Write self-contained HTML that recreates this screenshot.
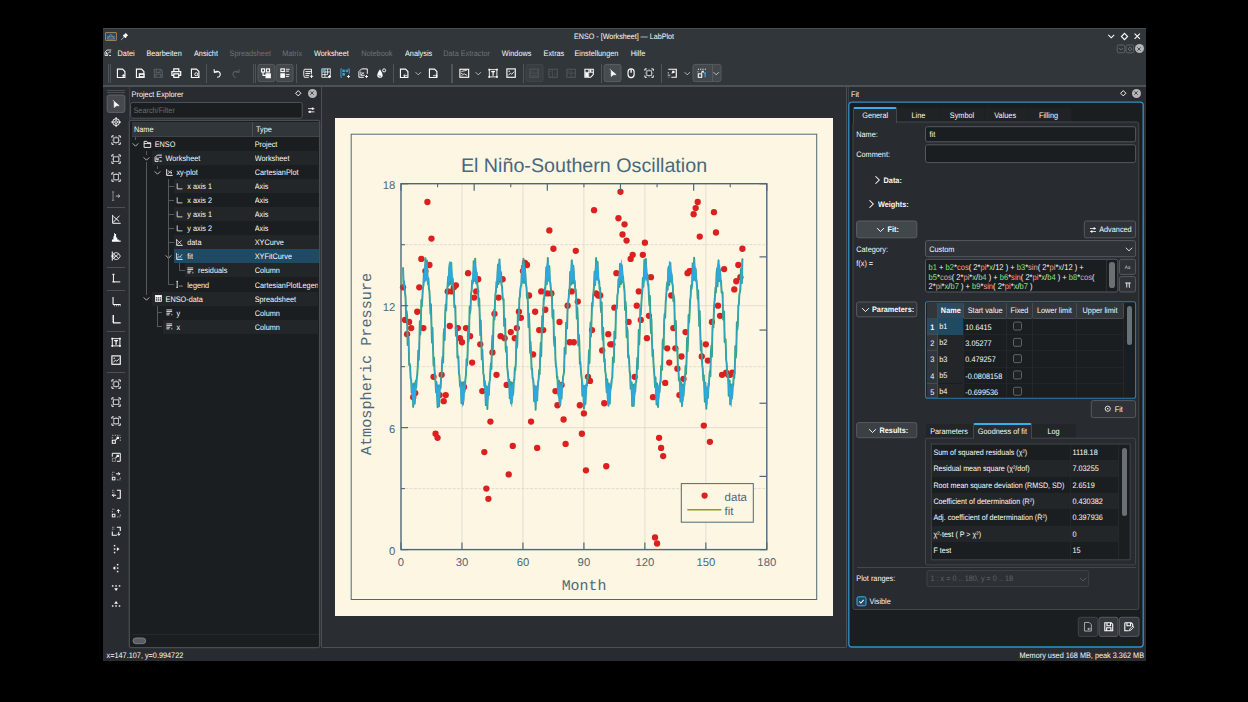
<!DOCTYPE html>
<html><head><meta charset="utf-8"><title>ENSO - [Worksheet] — LabPlot</title>
<style>
*{box-sizing:border-box;margin:0;padding:0}
html,body{width:1248px;height:702px;background:#000;overflow:hidden}
body{position:relative;font-family:"Liberation Sans",sans-serif;font-size:7.3px;color:#fcfcfc;line-height:1;text-rendering:geometricPrecision}
.a{position:absolute}
.t{position:absolute;white-space:nowrap;line-height:10px;height:10px;transform:scaleY(1.1);transform-origin:50% 55%}
.dis{color:#6f7377}
.b{font-weight:bold}
#win{left:103px;top:28px;width:1043px;height:633px;background:#31363b}
.ico{position:absolute;width:12px;height:12px;fill:none;stroke:#fcfcfc;stroke-width:1}
.sep{position:absolute;width:1px;background:#4b5055}
.btn{position:absolute;background:#31363b;border:1px solid #5b6065;border-radius:2px}
.inp{position:absolute;background:#1b1e20;border:1px solid #54595e;border-radius:2px}
.row{position:absolute;left:131px;width:188px;height:14px}
</style></head><body>
<div class="a" id="win"></div>

<div class="a" style="left:103px;top:28px;width:1043.00px;height:1.00px;background:#474c52"></div>
<div class="a" style="left:103px;top:86.6px;width:1043.00px;height:574.40px;background:#282b2f"></div>
<div class="a" style="left:105px;top:31.6px;width:11.8px;height:9.7px;background:#2d4a63;border:1px solid #9c7f55;border-radius:1px"></div>
<svg class="a" style="left:106px;top:32.6px" width="9.8" height="7.7" viewBox="0 0 10 8" fill="none" stroke="#8fa6b8" stroke-width="0.7"><path d="M1 4 H9 M1 6 L5 1.5 L9 6 M1 6.3 H9"/></svg>
<svg class="a" style="left:119.5px;top:31.5px" width="9" height="9" viewBox="0 0 16 16" fill="#fcfcfc" stroke="none"><path d="M10 1.5 L14.5 6 L12.5 7 L10.5 10.5 L9 10.5 L7.5 9 L2 14.5 L1.5 14 L7 8.5 L5.5 7 L5.5 5.5 L9 3.5 Z"/></svg>
<div class="t " style="left:624px;top:32px;transform:translateX(-50%) scaleY(1.1);font-size:7.15px">ENSO - [Worksheet] — LabPlot</div>
<svg class="a" style="left:1106.75px;top:32.35px" width="8.5" height="8.5" viewBox="0 0 16 16" fill="none" stroke="#fcfcfc" stroke-width="1.5" ><path d="M2.5 5.5 L8 11 L13.5 5.5" stroke-width="2"/></svg>
<svg class="a" style="left:1119.50px;top:31.80px" width="9" height="9" viewBox="0 0 16 16" fill="none" stroke="#fcfcfc" stroke-width="1.5" ><path d="M8 2.5 L13.5 8 L8 13.5 L2.5 8 Z" stroke-width="2"/></svg>
<svg class="a" style="left:1132.95px;top:32.05px" width="8.5" height="8.5" viewBox="0 0 16 16" fill="none" stroke="#fcfcfc" stroke-width="1.5" ><path d="M3 3 L13 13 M13 3 L3 13" stroke-width="2"/></svg>
<svg class="a" style="left:1115px;top:43px" width="13" height="13"><rect x="2.20" y="2.00" width="7.60" height="7.80" rx="1.5" fill="none" stroke="#5d6267" stroke-width="1.0"/></svg>
<svg class="a" style="left:1118.00px;top:46.30px" width="6" height="6" viewBox="0 0 16 16" fill="none" stroke="#7c8186" stroke-width="1.5" ><path d="M3 5.5 L8 10.5 L13 5.5" stroke-width="2"/></svg>
<svg class="a" style="left:1124px;top:43px" width="13" height="13"><rect x="2.00" y="2.00" width="7.60" height="7.80" rx="1.5" fill="none" stroke="#5d6267" stroke-width="1.0"/></svg>
<svg class="a" style="left:1126.80px;top:45.90px" width="6" height="6" viewBox="0 0 16 16" fill="none" stroke="#7c8186" stroke-width="1.5" ><path d="M8 3 L13 8 L8 13 L3 8 Z" stroke-width="2"/></svg>
<div class="a" style="left:1134.9px;top:44.3px;width:9.00px;height:9.00px;background:#b4b6b8;border-radius:50%"></div>
<svg class="a" style="left:1136.40px;top:45.80px" width="6" height="6" viewBox="0 0 16 16" fill="none" stroke="#31363b" stroke-width="1.5" ><path d="M3.5 3.5 L12.5 12.5 M12.5 3.5 L3.5 12.5" stroke-width="2.2"/></svg>
<svg class="a" style="left:103.70px;top:49.20px" width="8" height="7" viewBox="0 0 16 14" fill="none" stroke="#fcfcfc" stroke-width="1.5" ><path d="M2 13 V6 L6 2 H14.5 M2 13 H8 M5 6 V10.5 H9 M6 9.5 L9 6.5 M10 6 H14 M10 13 H14" stroke-width="1.6"/></svg>
<div class="t " style="left:117.6px;top:49px;">Datei</div>
<div class="t " style="left:146.4px;top:49px;">Bearbeiten</div>
<div class="t " style="left:194px;top:49px;">Ansicht</div>
<div class="t dis" style="left:229.6px;top:49px;">Spreadsheet</div>
<div class="t dis" style="left:282.2px;top:49px;">Matrix</div>
<div class="t " style="left:314px;top:49px;">Worksheet</div>
<div class="t dis" style="left:361.2px;top:49px;">Notebook</div>
<div class="t " style="left:405px;top:49px;">Analysis</div>
<div class="t dis" style="left:443.3px;top:49px;">Data Extractor</div>
<div class="t " style="left:501.8px;top:49px;">Windows</div>
<div class="t " style="left:543.6px;top:49px;">Extras</div>
<div class="t " style="left:574.5px;top:49px;">Einstellungen</div>
<div class="t " style="left:630.7px;top:49px;">Hilfe</div>
<div class="a" style="left:108px;top:64px;width:1.00px;height:18.50px;background:#50555a"></div><div class="a" style="left:110px;top:64px;width:1.00px;height:18.50px;background:#50555a"></div>
<svg class="a" style="left:114.90px;top:67.40px" width="12.2" height="12.2" viewBox="0 0 16 16" fill="none" stroke="#fcfcfc" stroke-width="1.5" ><path d="M3.2 2.8 H9.8 L13 6 V13.8 H3.2 Z"/><path d="M11 9.5 V13.5 M9 11.5 H13" stroke-width="1.2"/></svg>
<svg class="a" style="left:133.60px;top:67.40px" width="12.2" height="12.2" viewBox="0 0 16 16" fill="none" stroke="#fcfcfc" stroke-width="1.5" ><path d="M3.2 2.8 H9.8 L13 6 V13.8 H3.2 Z"/><rect x="7" y="9" width="6" height="4.5" fill="#31363b"/><path d="M7 9.5 H13 M7.5 13 H12.5"/></svg>
<svg class="a" style="left:151.90px;top:67.40px" width="12.2" height="12.2" viewBox="0 0 16 16" fill="none" stroke="#585c61" stroke-width="1.5" ><path d="M3 3 H11.5 L13.5 5 V13.5 H3 Z M5.5 3 V7 H10.5 V3 M5 13 V9.5 H11.5 V13"/></svg>
<svg class="a" style="left:170.30px;top:67.40px" width="12.2" height="12.2" viewBox="0 0 16 16" fill="none" stroke="#fcfcfc" stroke-width="1.5" ><path d="M5 6 V2.5 H11.5 V6 M5 11 H2.5 V6 H14 V11 H11.5 M5 9 H11.5 V13.5 H5 Z" stroke-width="1.6"/></svg>
<svg class="a" style="left:188.90px;top:67.40px" width="12.2" height="12.2" viewBox="0 0 16 16" fill="none" stroke="#fcfcfc" stroke-width="1.5" ><path d="M3.2 2.8 H9.8 L13 6 V13.8 H3.2 Z"/><circle cx="9.5" cy="9.5" r="2" stroke-width="1.2"/><path d="M11 11 L13.5 13.5" stroke-width="1.2"/></svg>
<div class="a" style="left:206px;top:64px;width:1.00px;height:18.50px;background:#50555a"></div>
<svg class="a" style="left:210.90px;top:67.40px" width="12.2" height="12.2" viewBox="0 0 16 16" fill="none" stroke="#fcfcfc" stroke-width="1.5" ><path d="M4 3 L4.5 7 L8.5 6.5 M4.8 6.8 C9 4 13 7 12 11 C11.5 12.5 10 13.5 8 13.5"/></svg>
<svg class="a" style="left:229.90px;top:67.40px" width="12.2" height="12.2" viewBox="0 0 16 16" fill="none" stroke="#585c61" stroke-width="1.5" ><path d="M12 3 L11.5 7 L7.5 6.5 M11.2 6.8 C7 4 3 7 4 11 C4.5 12.5 6 13.5 8 13.5"/></svg>
<div class="a" style="left:253.3px;top:64px;width:1.00px;height:18.50px;background:#50555a"></div><div class="a" style="left:255.3px;top:64px;width:1.00px;height:18.50px;background:#50555a"></div>
<svg class="a" style="left:256px;top:62px" width="22" height="23"><rect x="2.00" y="2.40" width="16.80" height="17.20" rx="2.0" fill="#43484d" stroke="#565b60" stroke-width="1.0"/></svg>
<svg class="a" style="left:274px;top:62px" width="23" height="23"><rect x="2.20" y="2.40" width="16.80" height="17.20" rx="2.0" fill="#43484d" stroke="#565b60" stroke-width="1.0"/></svg>
<svg class="a" style="left:260.40px;top:67.40px" width="12.2" height="12.2" viewBox="0 0 16 16" fill="none" stroke="#fcfcfc" stroke-width="1.5" ><rect x="2" y="2.5" width="4" height="4"/><rect x="8.5" y="2.5" width="4" height="4"/><rect x="8" y="9" width="5.5" height="5" fill="#fcfcfc"/><path d="M4 6.5 V11 H8"/></svg>
<svg class="a" style="left:278.60px;top:67.40px" width="12.2" height="12.2" viewBox="0 0 16 16" fill="none" stroke="#fcfcfc" stroke-width="1.5" ><rect x="2.5" y="2.5" width="4.5" height="3.5"/><rect x="2.5" y="9" width="4.5" height="4.5" fill="#fcfcfc"/><path d="M9 3 H14 M9 5.5 H13 M9 10 H14 M9 12.5 H13" stroke-width="1.1"/></svg>
<div class="a" style="left:296.1px;top:64px;width:1.00px;height:18.50px;background:#50555a"></div>
<svg class="a" style="left:301.60px;top:67.40px" width="12.2" height="12.2" viewBox="0 0 16 16" fill="none" stroke="#fcfcfc" stroke-width="1.5" ><path d="M3 3 H13 M3 3 C2 5 2 11 3 13.5 H9 M4.5 6 H12 M4.5 8.5 H11 M4.5 11 H9.5 M12.5 3 V9" stroke-width="1.2"/><path d="M12.5 10 V14.5 M10.3 12.2 H14.7" stroke-width="1.2"/></svg>
<svg class="a" style="left:319.90px;top:67.40px" width="12.2" height="12.2" viewBox="0 0 16 16" fill="none" stroke="#fcfcfc" stroke-width="1.5" ><rect x="2.5" y="2.5" width="11" height="11" stroke-width="1"/><path d="M2.5 6.5 H13.5 M2.5 10 H10 M6.5 2.5 V13.5 M10 2.5 V10" stroke-width="1"/><rect x="3" y="3" width="3.5" height="3.5" fill="#3daee9" stroke="none"/><path d="M12.5 10.5 V14.5 M10.5 12.5 H14.5" stroke-width="1.2"/></svg>
<svg class="a" style="left:338.60px;top:67.40px" width="12.2" height="12.2" viewBox="0 0 16 16" fill="none" stroke="#fcfcfc" stroke-width="1.5" ><path d="M4 2.5 H2.5 V13.5 H4 M12 2.5 H13.5 V9" stroke="#3daee9" stroke-width="1.1"/><rect x="5" y="4" width="2.2" height="2.2" stroke="#3daee9" stroke-width="1"/><rect x="9.3" y="4" width="2.2" height="2.2" stroke="#3daee9" stroke-width="1"/><rect x="5" y="8.6" width="2.2" height="2.2" stroke="#3daee9" stroke-width="1"/><path d="M12.5 10.5 V14.5 M10.5 12.5 H14.5" stroke-width="1.2"/></svg>
<svg class="a" style="left:356.90px;top:67.40px" width="12.2" height="12.2" viewBox="0 0 16 16" fill="none" stroke="#fcfcfc" stroke-width="1.5" ><path d="M2.5 13.5 V6 L6 2.5 H13.5 V9 M2.5 13.5 H9" stroke-width="1.3"/><path d="M5 6 V11 H10 M5.5 10.5 L9 7 M6.5 7 L9 9.5" stroke-width="1.1"/><path d="M12.5 10.5 V14.5 M10.5 12.5 H14.5" stroke-width="1.2"/></svg>
<svg class="a" style="left:374.90px;top:67.40px" width="12.2" height="12.2" viewBox="0 0 16 16" fill="none" stroke="#fcfcfc" stroke-width="1.5" ><path d="M6.5 3 C4 7 3 9 3 11 C3 13 4.5 14 6.5 14 C8.5 14 10 13 10 11 C10 9 9 7 6.5 3 Z" fill="#fcfcfc" stroke="none"/><circle cx="12" cy="4.5" r="2" stroke-width="1.3"/><path d="M5 11 C5.5 12.5 7 12.5 8 12" stroke="#31363b" stroke-width="1"/></svg>
<div class="a" style="left:393.2px;top:64px;width:1.00px;height:18.50px;background:#50555a"></div>
<svg class="a" style="left:397.90px;top:67.40px" width="12.2" height="12.2" viewBox="0 0 16 16" fill="none" stroke="#fcfcfc" stroke-width="1.5" ><path d="M3.2 2.8 H9.8 L13 6 V13.8 H3.2 Z"/><path d="M12.5 11.5 H7.5 M9.5 9.5 L7.5 11.5 L9.5 13.5" stroke-width="1.2"/></svg>
<svg class="a" style="left:414.45px;top:69.05px" width="8.5" height="8.5" viewBox="0 0 16 16" fill="none" stroke="#f0f0f0" stroke-width="1.5" ><path d="M3 6 L8 11 L13 6" stroke-width="1.3"/></svg>
<svg class="a" style="left:426.90px;top:67.40px" width="12.2" height="12.2" viewBox="0 0 16 16" fill="none" stroke="#fcfcfc" stroke-width="1.5" ><path d="M3.2 2.8 H9.8 L13 6 V13.8 H3.2 Z"/><path d="M8 11.5 H13.5 M11.5 9.5 L13.5 11.5 L11.5 13.5" stroke-width="1.2"/></svg>
<div class="a" style="left:451.2px;top:64px;width:1.50px;height:18.50px;background:#50555a"></div>
<svg class="a" style="left:457.70px;top:67.40px" width="12.2" height="12.2" viewBox="0 0 16 16" fill="none" stroke="#fcfcfc" stroke-width="1.5" ><rect x="2.5" y="3" width="11.5" height="10.5"/><path d="M4.5 6 L8 5 L11.5 4.5 M4.5 11.5 L8 9 L12 11" stroke-width="1.1"/><circle cx="5" cy="8.5" r="0.8" fill="#fcfcfc" stroke="none"/></svg>
<svg class="a" style="left:474.35px;top:69.05px" width="8.5" height="8.5" viewBox="0 0 16 16" fill="none" stroke="#f0f0f0" stroke-width="1.5" ><path d="M3 6 L8 11 L13 6" stroke-width="1.3"/></svg>
<svg class="a" style="left:486.90px;top:67.40px" width="12.2" height="12.2" viewBox="0 0 16 16" fill="none" stroke="#fcfcfc" stroke-width="1.5" ><rect x="3" y="3.5" width="10" height="9.5" stroke-width="1.2"/><path d="M5.5 6 H10.5 M8 6 V11.5" stroke-width="1.6"/><rect x="1.8" y="2.3" width="2.2" height="2.2" fill="#fcfcfc" stroke="none"/><rect x="12" y="2.3" width="2.2" height="2.2" fill="#fcfcfc" stroke="none"/><rect x="1.8" y="12" width="2.2" height="2.2" fill="#fcfcfc" stroke="none"/><rect x="12" y="12" width="2.2" height="2.2" fill="#fcfcfc" stroke="none"/></svg>
<svg class="a" style="left:505.20px;top:67.40px" width="12.2" height="12.2" viewBox="0 0 16 16" fill="none" stroke="#fcfcfc" stroke-width="1.5" ><rect x="2.5" y="2.5" width="11" height="11"/><path d="M4.5 11 L7 8 L9 9.5 L12 6" stroke-width="1.1"/><circle cx="5.5" cy="5.5" r="0.9" fill="#fcfcfc" stroke="none"/></svg>
<div class="a" style="left:523.2px;top:64px;width:1.00px;height:18.50px;background:#50555a"></div>
<svg class="a" style="left:524px;top:62px" width="23" height="23"><rect x="2.00" y="2.40" width="17.00" height="17.20" rx="2.0" fill="#393e43" stroke="#41464b" stroke-width="1.0"/></svg>
<svg class="a" style="left:528.40px;top:67.40px" width="12.2" height="12.2" viewBox="0 0 16 16" fill="none" stroke="#4f5459" stroke-width="1.5" ><rect x="2.5" y="3" width="11" height="10.5"/><path d="M2.5 8 H13.5 M4.5 5 L6 6.5 M4.5 11.5 H11.5" stroke-width="1.1"/></svg>
<svg class="a" style="left:546.60px;top:67.40px" width="12.2" height="12.2" viewBox="0 0 16 16" fill="none" stroke="#4f5459" stroke-width="1.5" ><rect x="2.5" y="3" width="11" height="10.5"/><path d="M7 3 V13.5 M4 5 L5.5 6.5 M9 11 L12 8" stroke-width="1.1"/></svg>
<svg class="a" style="left:564.70px;top:67.40px" width="12.2" height="12.2" viewBox="0 0 16 16" fill="none" stroke="#4f5459" stroke-width="1.5" ><rect x="2.5" y="3" width="11" height="10.5"/><path d="M8 3 V13.5 M2.5 8 H13.5 M4 5 L5.5 6.5" stroke-width="1.1"/></svg>
<svg class="a" style="left:583.30px;top:67.40px" width="12.2" height="12.2" viewBox="0 0 16 16" fill="none" stroke="#fcfcfc" stroke-width="1.5" ><path d="M2.5 3 H13.5 V10 L10 13.5 H2.5 Z"/><rect x="3" y="7.5" width="4" height="5.5" fill="#fcfcfc" stroke="none"/><rect x="8.5" y="3.5" width="2.5" height="3" fill="#fcfcfc" stroke="none"/><path d="M7.5 3 V13.5 M2.5 7 H13.5" stroke-width="1.1"/></svg>
<div class="a" style="left:600.7px;top:64px;width:1.00px;height:18.50px;background:#50555a"></div>
<svg class="a" style="left:602px;top:62px" width="23" height="23"><rect x="2.20" y="2.40" width="16.80" height="17.20" rx="2.0" fill="#474c51" stroke="#5a5f64" stroke-width="1.0"/></svg>
<svg class="a" style="left:606.50px;top:67.40px" width="12.2" height="12.2" viewBox="0 0 16 16" fill="none" stroke="#fcfcfc" stroke-width="1.5" ><path d="M5.5 4.5 V12.5 L8 10.3 L12 10 Z" fill="#fcfcfc" stroke-width="0.8"/><path d="M4 3 L5.5 4.5" stroke-width="1.2"/></svg>
<svg class="a" style="left:624.60px;top:67.40px" width="12.2" height="12.2" viewBox="0 0 16 16" fill="none" stroke="#fcfcfc" stroke-width="1.5" ><rect x="4" y="2.5" width="8" height="11.5" rx="4"/><path d="M8 3 V7.5" stroke-width="1.8"/></svg>
<svg class="a" style="left:643.20px;top:67.40px" width="12.2" height="12.2" viewBox="0 0 16 16" fill="none" stroke="#fcfcfc" stroke-width="1.5" ><path d="M2.5 5 V2.5 H5 M11 2.5 H13.5 V5 M13.5 11 V13.5 H11 M5 13.5 H2.5 V11" stroke-width="1.3"/><rect x="5" y="5" width="6" height="6" fill="#1b1e20" stroke="#d0d2d4" stroke-width="1.3"/><path d="M8 2.5 V4.5 M8 11.5 V13.5 M2.5 8 H4.5 M11.5 8 H13.5" stroke-width="1.1" stroke="#b0b3b5"/></svg>
<div class="a" style="left:661px;top:64px;width:1.00px;height:18.50px;background:#50555a"></div>
<svg class="a" style="left:665.90px;top:67.40px" width="12.2" height="12.2" viewBox="0 0 16 16" fill="none" stroke="#fcfcfc" stroke-width="1.5" ><path d="M3 3 H13.5 V13.5 H7" /><path d="M3 7 V13.5 M5 10 V13.5" stroke-dasharray="1.5 1.5" stroke-width="1.2"/><path d="M10.5 5.5 L7.5 8.5 M8 5.5 H10.5 V8" stroke-width="1.4"/></svg>
<svg class="a" style="left:682.75px;top:69.05px" width="8.5" height="8.5" viewBox="0 0 16 16" fill="none" stroke="#f0f0f0" stroke-width="1.5" ><path d="M3 6 L8 11 L13 6" stroke-width="1.3"/></svg>
<svg class="a" style="left:691px;top:62px" width="34" height="23"><rect x="2.00" y="2.40" width="28.00" height="17.20" rx="2.0" fill="#43484d" stroke="#565b60" stroke-width="1.0"/></svg>
<div class="a" style="left:711.5px;top:65px;width:1.00px;height:16.00px;background:#565b60"></div>
<svg class="a" style="left:695.90px;top:67.40px" width="12.2" height="12.2" viewBox="0 0 16 16" fill="none" stroke="#fcfcfc" stroke-width="1.5" ><path d="M2.5 3 H13.5 M2.5 6 V7" stroke-dasharray="1.4 1.6" stroke-width="1.4"/><rect x="3" y="9" width="4.5" height="4.5" stroke-width="1.4"/><path d="M9 5.5 L7 7.5 M7.5 5.5 H9.5 V7.5" stroke-width="1.4"/><path d="M10.5 8.5 L12 7.5 V13.5" stroke="#3daee9" stroke-width="1.4"/></svg>
<svg class="a" style="left:712.05px;top:69.05px" width="8.5" height="8.5" viewBox="0 0 16 16" fill="none" stroke="#f0f0f0" stroke-width="1.5" ><path d="M3 6 L8 11 L13 6" stroke-width="1.3"/></svg>
<div class="a" style="left:103px;top:85.2px;width:1043.00px;height:1.40px;background:#4d5257"></div>
<div class="a" style="left:106.5px;top:90.2px;width:18.50px;height:1.00px;background:#4b5055"></div>
<div class="a" style="left:106.5px;top:92px;width:18.50px;height:1.00px;background:#4b5055"></div>
<svg class="a" style="left:105px;top:93px" width="23" height="23"><rect x="2.20" y="2.00" width="17.60" height="17.40" rx="2.0" fill="#464a4f" stroke="#5f6368" stroke-width="1.0"/></svg>
<svg class="a" style="left:109.90px;top:97.70px" width="12.2" height="12.2" viewBox="0 0 16 16" fill="none" stroke="#fcfcfc" stroke-width="1.5" ><path d="M5.5 4.5 V12.5 L8 10.3 L12 10 Z" fill="#fcfcfc" stroke-width="0.8"/><path d="M4 3 L5.5 4.5" stroke-width="1.2"/></svg>
<svg class="a" style="left:109.90px;top:115.90px" width="12.2" height="12.2" viewBox="0 0 16 16" fill="none" stroke="#fcfcfc" stroke-width="1.5" ><circle cx="8" cy="8" r="4.5" stroke-width="1.3"/><circle cx="8" cy="8" r="1.8" stroke-width="1.3"/><path d="M8 1.5 V5 M8 11 V14.5 M1.5 8 H5 M11 8 H14.5" stroke-width="1.3"/></svg>
<svg class="a" style="left:109.90px;top:134.40px" width="12.2" height="12.2" viewBox="0 0 16 16" fill="none" stroke="#fcfcfc" stroke-width="1.5" ><path d="M2.5 5 V2.5 H5 M11 2.5 H13.5 V5 M13.5 11 V13.5 H11 M5 13.5 H2.5 V11" stroke-width="1.3"/><rect x="5" y="5" width="6" height="6" fill="#1b1e20" stroke="#d0d2d4" stroke-width="1.3"/><path d="M8 2.5 V4.5 M8 11.5 V13.5 M2.5 8 H4.5 M11.5 8 H13.5" stroke-width="1.1" stroke="#b0b3b5"/></svg>
<svg class="a" style="left:109.90px;top:152.70px" width="12.2" height="12.2" viewBox="0 0 16 16" fill="none" stroke="#fcfcfc" stroke-width="1.5" ><path d="M2.5 5 V2.5 H5 M11 2.5 H13.5 V5 M13.5 11 V13.5 H11 M5 13.5 H2.5 V11" stroke-width="1.3"/><rect x="4.5" y="5" width="7" height="6" fill="#1b1e20" stroke="#d0d2d4" stroke-width="1.3"/><path d="M2.5 8 H4 M12 8 H13.5" stroke-width="1.1" stroke="#b0b3b5"/></svg>
<svg class="a" style="left:109.90px;top:171.20px" width="12.2" height="12.2" viewBox="0 0 16 16" fill="none" stroke="#fcfcfc" stroke-width="1.5" ><path d="M2.5 5 V2.5 H5 M11 2.5 H13.5 V5 M13.5 11 V13.5 H11 M5 13.5 H2.5 V11" stroke-width="1.3"/><rect x="5" y="4.5" width="6" height="7" fill="#1b1e20" stroke="#d0d2d4" stroke-width="1.3"/><path d="M8 2.5 V4 M8 12 V13.5" stroke-width="1.1" stroke="#b0b3b5"/></svg>
<svg class="a" style="left:109.90px;top:189.60px" width="12.2" height="12.2" viewBox="0 0 16 16" fill="none" stroke="#fcfcfc" stroke-width="1.5" ><path d="M4 2.5 V13.5 M2.5 2.5 H5.5 M2.5 13.5 H5.5" stroke="#8d9194" stroke-width="1.2"/><path d="M7.5 8 H13 M10.5 6 L13 8 L10.5 10" stroke="#b5b8ba" stroke-width="1.3"/></svg>
<svg class="a" style="left:109.90px;top:212.90px" width="12.2" height="12.2" viewBox="0 0 16 16" fill="none" stroke="#fcfcfc" stroke-width="1.5" ><path d="M3.5 2.5 V13.5 H14" stroke-width="1.3"/><path d="M4 12.5 L12.5 3.5 M4.5 4.5 L12 11" stroke-width="1.2"/></svg>
<svg class="a" style="left:109.90px;top:231.20px" width="12.2" height="12.2" viewBox="0 0 16 16" fill="none" stroke="#fcfcfc" stroke-width="1.5" ><path d="M2.5 14 H14 V12.5 H11.5 V11 H9.5 V8.5 H8 V4 H6.5 V2.5 H5.5 V7 H4.5 V11 H2.5 Z" fill="#fcfcfc" stroke="none"/></svg>
<svg class="a" style="left:109.90px;top:249.60px" width="12.2" height="12.2" viewBox="0 0 16 16" fill="none" stroke="#fcfcfc" stroke-width="1.5" ><path d="M3 2 V14 M1.5 8 H6" stroke-width="1.3"/><path d="M3 8 C5 2 11 2 13.5 8 C11 14 5 14 3 8 Z M4 4.5 L12 11.5 M4 11.5 L12 4.5" stroke-width="1.1"/></svg>
<svg class="a" style="left:109.90px;top:272.40px" width="12.2" height="12.2" viewBox="0 0 16 16" fill="none" stroke="#fcfcfc" stroke-width="1.5" ><path d="M4.5 3 V13 M3 3 H6 M3 13 H6 M4.5 13 H13.5" stroke-width="1.3"/></svg>
<svg class="a" style="left:109.90px;top:294.90px" width="12.2" height="12.2" viewBox="0 0 16 16" fill="none" stroke="#fcfcfc" stroke-width="1.5" ><path d="M4 2.5 V12.5" stroke-width="1.4"/><path d="M4 12.5 H14" stroke-width="1.4"/><path d="M6 13.5 V14.8 M8.5 13.5 V14.8 M11 13.5 V14.8 M13.5 13.5 V14.8" stroke-width="1"/></svg>
<svg class="a" style="left:109.90px;top:313.40px" width="12.2" height="12.2" viewBox="0 0 16 16" fill="none" stroke="#fcfcfc" stroke-width="1.5" ><path d="M4.5 2.5 V13 H14" stroke-width="1.4"/><path d="M2.5 4 H3.8 M2.5 6.5 H3.8 M2.5 9 H3.8 M2.5 11.5 H3.8" stroke-width="1"/></svg>
<svg class="a" style="left:109.90px;top:335.90px" width="12.2" height="12.2" viewBox="0 0 16 16" fill="none" stroke="#fcfcfc" stroke-width="1.5" ><rect x="3" y="3.5" width="10" height="9.5" stroke-width="1.2"/><path d="M5.5 6 H10.5 M8 6 V11.5" stroke-width="1.6"/><rect x="1.8" y="2.3" width="2.2" height="2.2" fill="#fcfcfc" stroke="none"/><rect x="12" y="2.3" width="2.2" height="2.2" fill="#fcfcfc" stroke="none"/><rect x="1.8" y="12" width="2.2" height="2.2" fill="#fcfcfc" stroke="none"/><rect x="12" y="12" width="2.2" height="2.2" fill="#fcfcfc" stroke="none"/></svg>
<svg class="a" style="left:109.90px;top:354.40px" width="12.2" height="12.2" viewBox="0 0 16 16" fill="none" stroke="#fcfcfc" stroke-width="1.5" ><rect x="2.5" y="2.5" width="11" height="11"/><path d="M4.5 11 L7 8 L9 9.5 L12 6" stroke-width="1.1"/><circle cx="5.5" cy="5.5" r="0.9" fill="#fcfcfc" stroke="none"/></svg>
<svg class="a" style="left:109.90px;top:377.90px" width="12.2" height="12.2" viewBox="0 0 16 16" fill="none" stroke="#fcfcfc" stroke-width="1.5" ><path d="M2.5 5 V2.5 H5 M11 2.5 H13.5 V5 M13.5 11 V13.5 H11 M5 13.5 H2.5 V11" stroke-width="1.3"/><rect x="5" y="5" width="6" height="6" fill="#1b1e20" stroke="#d0d2d4" stroke-width="1.3"/><path d="M8 2.5 V4.5 M8 11.5 V13.5 M2.5 8 H4.5 M11.5 8 H13.5" stroke-width="1.1" stroke="#b0b3b5"/></svg>
<svg class="a" style="left:109.90px;top:396.20px" width="12.2" height="12.2" viewBox="0 0 16 16" fill="none" stroke="#fcfcfc" stroke-width="1.5" ><path d="M2.5 5 V2.5 H5 M11 2.5 H13.5 V5 M13.5 11 V13.5 H11 M5 13.5 H2.5 V11" stroke-width="1.3"/><rect x="4.5" y="5" width="7" height="6" fill="#1b1e20" stroke="#d0d2d4" stroke-width="1.3"/><path d="M2.5 8 H4 M12 8 H13.5" stroke-width="1.1" stroke="#b0b3b5"/></svg>
<svg class="a" style="left:109.90px;top:414.60px" width="12.2" height="12.2" viewBox="0 0 16 16" fill="none" stroke="#fcfcfc" stroke-width="1.5" ><path d="M2.5 5 V2.5 H5 M11 2.5 H13.5 V5 M13.5 11 V13.5 H11 M5 13.5 H2.5 V11" stroke-width="1.3"/><rect x="5" y="4.5" width="6" height="7" fill="#1b1e20" stroke="#d0d2d4" stroke-width="1.3"/><path d="M8 2.5 V4 M8 12 V13.5" stroke-width="1.1" stroke="#b0b3b5"/></svg>
<svg class="a" style="left:109.90px;top:432.90px" width="12.2" height="12.2" viewBox="0 0 16 16" fill="none" stroke="#fcfcfc" stroke-width="1.5" ><path d="M3 3 H13.5 M13.5 5.5 V11 M3 5.5 V7.5" stroke-dasharray="1.5 1.7" stroke-width="1.3" stroke="#c4c6c8"/><rect x="3" y="9.5" width="4" height="4" stroke-width="1.3"/><path d="M7.5 9 L11 5.5 M8.5 5.5 H11 V8" stroke-width="1.4"/></svg>
<svg class="a" style="left:109.90px;top:451.40px" width="12.2" height="12.2" viewBox="0 0 16 16" fill="none" stroke="#fcfcfc" stroke-width="1.5" ><path d="M3 7.5 V3 H13.5 V13.5 H9" stroke-width="1.3"/><rect x="3" y="9.5" width="4" height="4" stroke-width="1.1" stroke="#8e9294"/><path d="M7.5 9 L11 5.5 M8.5 5.5 H11 V8" stroke-width="1.4"/></svg>
<svg class="a" style="left:109.90px;top:469.90px" width="12.2" height="12.2" viewBox="0 0 16 16" fill="none" stroke="#fcfcfc" stroke-width="1.5" ><path d="M3 3 H6.5 M3 5.5 V7" stroke-dasharray="1.5 1.5" stroke-width="1.3" stroke="#c4c6c8"/><rect x="3" y="9.5" width="3.5" height="3.5" stroke-width="1.2"/><path d="M8 5 H13 M11 3 L13 5 L11 7" stroke-width="1.3"/><path d="M9.5 13 H11 M12.5 13 H13.5 M13.5 10 V11.5" stroke-width="1.3" stroke="#c4c6c8"/></svg>
<svg class="a" style="left:109.90px;top:488.20px" width="12.2" height="12.2" viewBox="0 0 16 16" fill="none" stroke="#fcfcfc" stroke-width="1.5" ><path d="M3 3 H6 M3 5.5 H6" stroke-dasharray="1.5 1.2" stroke-width="1.3" stroke="#c4c6c8"/><path d="M9 3 H13.5 V13.5 H9" stroke-width="1.4"/><path d="M3 9.5 H8 M5 7.5 L3 9.5 L5 11.5" stroke-width="1.3"/></svg>
<svg class="a" style="left:109.90px;top:506.60px" width="12.2" height="12.2" viewBox="0 0 16 16" fill="none" stroke="#fcfcfc" stroke-width="1.5" ><path d="M3 3 H6.5 M3 5.5 V7" stroke-dasharray="1.5 1.5" stroke-width="1.3" stroke="#c4c6c8"/><rect x="3" y="9.5" width="3.5" height="3.5" stroke-width="1.2"/><path d="M11 8 V3.5 M9 5.5 L11 3.5 L13 5.5" stroke-width="1.3"/><path d="M9.5 13 H11 M12.5 13 H13.5 M13.5 10 V11.5" stroke-width="1.3" stroke="#c4c6c8"/></svg>
<svg class="a" style="left:109.90px;top:524.90px" width="12.2" height="12.2" viewBox="0 0 16 16" fill="none" stroke="#fcfcfc" stroke-width="1.5" ><path d="M3 3 H6 M3 5.5 H6" stroke-dasharray="1.5 1.2" stroke-width="1.3" stroke="#c4c6c8"/><path d="M9 3 H13.5 V8 M3 8.5 V13.5 H9" stroke-width="1.4"/><path d="M11.5 9 V13.5 M9.5 11.5 L11.5 13.5 L13.5 11.5" stroke-width="1.3"/></svg>
<svg class="a" style="left:109.90px;top:543.40px" width="12.2" height="12.2" viewBox="0 0 16 16" fill="none" stroke="#fcfcfc" stroke-width="1.5" ><rect x="5" y="2.5" width="2" height="2" fill="#e8e8e8" stroke="none"/><rect x="5" y="7" width="2" height="2" fill="#e8e8e8" stroke="none"/><rect x="5" y="11.5" width="2" height="2" fill="#e8e8e8" stroke="none"/><path d="M9 5.5 L12.5 8 L9 10.5 Z" fill="#fcfcfc" stroke="none"/></svg>
<svg class="a" style="left:109.90px;top:561.90px" width="12.2" height="12.2" viewBox="0 0 16 16" fill="none" stroke="#fcfcfc" stroke-width="1.5" ><rect x="9" y="2.5" width="2" height="2" fill="#e8e8e8" stroke="none"/><rect x="9" y="7" width="2" height="2" fill="#e8e8e8" stroke="none"/><rect x="9" y="11.5" width="2" height="2" fill="#e8e8e8" stroke="none"/><path d="M7 5.5 L3.5 8 L7 10.5 Z" fill="#fcfcfc" stroke="none"/></svg>
<svg class="a" style="left:109.90px;top:580.90px" width="12.2" height="12.2" viewBox="0 0 16 16" fill="none" stroke="#fcfcfc" stroke-width="1.5" ><rect x="2.5" y="5.5" width="2" height="2" fill="#e8e8e8" stroke="none"/><rect x="7" y="5.5" width="2" height="2" fill="#e8e8e8" stroke="none"/><rect x="11.5" y="5.5" width="2" height="2" fill="#e8e8e8" stroke="none"/><path d="M5.5 9.5 L8 13 L10.5 9.5 Z" fill="#fcfcfc" stroke="none"/></svg>
<svg class="a" style="left:109.90px;top:597.90px" width="12.2" height="12.2" viewBox="0 0 16 16" fill="none" stroke="#fcfcfc" stroke-width="1.5" ><rect x="2.5" y="9.5" width="2" height="2" fill="#e8e8e8" stroke="none"/><rect x="7" y="9.5" width="2" height="2" fill="#e8e8e8" stroke="none"/><rect x="11.5" y="9.5" width="2" height="2" fill="#e8e8e8" stroke="none"/><path d="M5.5 7.5 L8 4 L10.5 7.5 Z" fill="#fcfcfc" stroke="none"/></svg>
<div class="a" style="left:106.5px;top:207.3px;width:18.50px;height:1.00px;background:#4b5055"></div>
<div class="a" style="left:106.5px;top:267px;width:18.50px;height:1.00px;background:#4b5055"></div>
<div class="a" style="left:106.5px;top:289.8px;width:18.50px;height:1.00px;background:#4b5055"></div>
<div class="a" style="left:106.5px;top:330.8px;width:18.50px;height:1.00px;background:#4b5055"></div>
<div class="a" style="left:106.5px;top:372.3px;width:18.50px;height:1.00px;background:#4b5055"></div>
<div class="t " style="left:131.6px;top:90px;">Project Explorer</div>
<svg class="a" style="left:294.35px;top:89.05px" width="8.5" height="8.5" viewBox="0 0 16 16" fill="none" stroke="#fcfcfc" stroke-width="1.5" ><path d="M8 3 L13 8 L8 13 L3 8 Z" stroke-width="1.8"/></svg>
<div class="a" style="left:307.5px;top:88.8px;width:9.00px;height:9.00px;background:#b4b6b8;border-radius:50%"></div>
<svg class="a" style="left:309.00px;top:90.30px" width="6" height="6" viewBox="0 0 16 16" fill="none" stroke="#31363b" stroke-width="1.5" ><path d="M3.5 3.5 L12.5 12.5 M12.5 3.5 L3.5 12.5" stroke-width="2.2"/></svg>
<svg class="a" style="left:128px;top:100px" width="178" height="22"><rect x="2.60" y="2.40" width="171.60" height="15.80" rx="2.0" fill="#1b1e20" stroke="#50555a" stroke-width="1.0"/></svg>
<div class="t " style="left:133.5px;top:106px;color:#6a6e72">Search/Filter</div>
<svg class="a" style="left:306.75px;top:106.25px" width="8.5" height="8.5" viewBox="0 0 16 16" fill="none" stroke="#fcfcfc" stroke-width="1.5" ><path d="M2 5 H14 M2 11 H14" stroke-width="1.6"/><rect x="9" y="3" width="3" height="4" fill="#fcfcfc" stroke="none"/><rect x="4" y="9" width="3" height="4" fill="#fcfcfc" stroke="none"/></svg>
<svg class="a" style="left:127px;top:118px" width="196" height="533"><rect x="2.30" y="2.30" width="190.30" height="527.30" rx="1.5" fill="#1b1e20" stroke="#484d52" stroke-width="1.3"/></svg>
<div class="a" style="left:129.3px;top:87px;width:1.00px;height:34.00px;background:#3a3f44"></div>
<div class="a" style="left:131.5px;top:121.5px;width:187.00px;height:15.00px;background:#31363b;border-bottom:1px solid #3f4449"></div>
<div class="a" style="left:252px;top:121.5px;width:1.00px;height:15.00px;background:#4a4f54"></div>
<div class="t " style="left:134px;top:125px;">Name</div>
<div class="t " style="left:256px;top:125px;">Type</div>
<svg class="a" style="left:131.40px;top:139.93px" width="9" height="9" viewBox="0 0 16 16" fill="none" stroke="#d8dadc" stroke-width="1.5" ><path d="M3 6 L8 11 L13 6" stroke-width="1.4"/></svg>
<svg class="a" style="left:142.90px;top:139.72px" width="8.8" height="8.8" viewBox="0 0 16 16" fill="none" stroke="#fcfcfc" stroke-width="1.5" ><path d="M2 13.5 V2.5 H7 L8.5 5 H14 V13.5 Z M2 6.5 H14" stroke-width="1.6"/></svg>
<div class="t " style="left:154.70000000000002px;top:140px;">ENSO</div>
<div class="t" style="left:254.7px;top:140px;width:63.5px;overflow:hidden">Project</div>
<div class="a" style="left:152.05px;top:151.05px;width:166.45px;height:14.05px;background:#232629"></div>
<svg class="a" style="left:142.25px;top:153.98px" width="9" height="9" viewBox="0 0 16 16" fill="none" stroke="#d8dadc" stroke-width="1.5" ><path d="M3 6 L8 11 L13 6" stroke-width="1.4"/></svg>
<svg class="a" style="left:153.75px;top:153.78px" width="8.8" height="8.8" viewBox="0 0 16 16" fill="none" stroke="#fcfcfc" stroke-width="1.5" ><path d="M2 13.5 V6 L6 2 H14.5 M2 13.5 H8 M5 6 V10.5 H9 M6 9.5 L9 6.5 M10 6 H14 M10 13 H14" stroke-width="1.6"/></svg>
<div class="t " style="left:165.55px;top:154px;">Worksheet</div>
<div class="t" style="left:254.7px;top:154px;width:63.5px;overflow:hidden">Worksheet</div>
<svg class="a" style="left:153.10px;top:168.03px" width="9" height="9" viewBox="0 0 16 16" fill="none" stroke="#d8dadc" stroke-width="1.5" ><path d="M3 6 L8 11 L13 6" stroke-width="1.4"/></svg>
<svg class="a" style="left:164.60px;top:167.82px" width="8.8" height="8.8" viewBox="0 0 16 16" fill="none" stroke="#fcfcfc" stroke-width="1.5" ><path d="M3 2 V13.5 H14" stroke-width="1.6"/><path d="M4 12 L12 4 M5 4.5 L12.5 11" stroke-width="1.3"/><circle cx="11.5" cy="8" r="1" fill="#fcfcfc" stroke="none"/></svg>
<div class="t " style="left:176.4px;top:168px;">xy-plot</div>
<div class="t" style="left:254.7px;top:168px;width:63.5px;overflow:hidden">CartesianPlot</div>
<div class="a" style="left:173.75px;top:179.15px;width:144.75px;height:14.05px;background:#232629"></div>
<svg class="a" style="left:175.45px;top:181.88px" width="8.8" height="8.8" viewBox="0 0 16 16" fill="none" stroke="#fcfcfc" stroke-width="1.5" ><path d="M4 2.5 V12.5 H13.5" stroke-width="1.4"/></svg>
<div class="t " style="left:187.25px;top:182px;">x axis 1</div>
<div class="t" style="left:254.7px;top:182px;width:63.5px;overflow:hidden">Axis</div>
<svg class="a" style="left:175.45px;top:195.92px" width="8.8" height="8.8" viewBox="0 0 16 16" fill="none" stroke="#fcfcfc" stroke-width="1.5" ><path d="M4 2.5 V12.5 H13.5" stroke-width="1.4"/></svg>
<div class="t " style="left:187.25px;top:196px;">x axis 2</div>
<div class="t" style="left:254.7px;top:196px;width:63.5px;overflow:hidden">Axis</div>
<div class="a" style="left:173.75px;top:207.25px;width:144.75px;height:14.05px;background:#232629"></div>
<svg class="a" style="left:175.45px;top:209.97px" width="8.8" height="8.8" viewBox="0 0 16 16" fill="none" stroke="#fcfcfc" stroke-width="1.5" ><path d="M4 2.5 V12.5 H13.5" stroke-width="1.4"/></svg>
<div class="t " style="left:187.25px;top:210px;">y axis 1</div>
<div class="t" style="left:254.7px;top:210px;width:63.5px;overflow:hidden">Axis</div>
<svg class="a" style="left:175.45px;top:224.03px" width="8.8" height="8.8" viewBox="0 0 16 16" fill="none" stroke="#fcfcfc" stroke-width="1.5" ><path d="M4 2.5 V12.5 H13.5" stroke-width="1.4"/></svg>
<div class="t " style="left:187.25px;top:224px;">y axis 2</div>
<div class="t" style="left:254.7px;top:224px;width:63.5px;overflow:hidden">Axis</div>
<div class="a" style="left:173.75px;top:235.35000000000002px;width:144.75px;height:14.05px;background:#232629"></div>
<svg class="a" style="left:175.45px;top:238.08px" width="8.8" height="8.8" viewBox="0 0 16 16" fill="none" stroke="#fcfcfc" stroke-width="1.5" ><path d="M3 2 V13.5 H14" stroke-width="1.5"/><path d="M4 4 L12 12 M4 12 L12 4.5" stroke-width="1.2"/></svg>
<div class="t " style="left:187.25px;top:238px;">data</div>
<div class="t" style="left:254.7px;top:238px;width:63.5px;overflow:hidden">XYCurve</div>
<div class="a" style="left:173.75px;top:249.4px;width:144.75px;height:14.05px;background:#1f4a63"></div>
<svg class="a" style="left:163.95px;top:252.33px" width="9" height="9" viewBox="0 0 16 16" fill="none" stroke="#d8dadc" stroke-width="1.5" ><path d="M3 6 L8 11 L13 6" stroke-width="1.4"/></svg>
<svg class="a" style="left:175.45px;top:252.13px" width="8.8" height="8.8" viewBox="0 0 16 16" fill="none" stroke="#fcfcfc" stroke-width="1.5" ><path d="M3 2 V13.5 H14" stroke-width="1.5"/><path d="M4 12 L7 8 L9 9.5 L13 4" stroke-width="1.2"/><circle cx="6" cy="5" r="0.9" fill="#fcfcfc" stroke="none"/><circle cx="11" cy="10.5" r="0.9" fill="#fcfcfc" stroke="none"/></svg>
<div class="t " style="left:187.25px;top:252px;">fit</div>
<div class="t" style="left:254.7px;top:252px;width:63.5px;overflow:hidden">XYFitCurve</div>
<div class="a" style="left:184.60000000000002px;top:263.45px;width:133.90px;height:14.05px;background:#232629"></div>
<svg class="a" style="left:186.30px;top:266.18px" width="8.8" height="8.8" viewBox="0 0 16 16" fill="none" stroke="#fcfcfc" stroke-width="1.5" ><path d="M2.5 3.5 H13 M2.5 6.5 H13 M2.5 9.5 H9.5 M2.5 12.5 H8" stroke-width="1.5"/><path d="M12.5 10.5 V13.5" stroke-width="1.2"/></svg>
<div class="t " style="left:198.10000000000002px;top:266px;">residuals</div>
<div class="t" style="left:254.7px;top:266px;width:63.5px;overflow:hidden">Column</div>
<svg class="a" style="left:175.45px;top:280.23px" width="8.8" height="8.8" viewBox="0 0 16 16" fill="none" stroke="#fcfcfc" stroke-width="1.5" ><path d="M4 2.5 V13.5 M2.5 2.5 H5.5 M2.5 13.5 H5.5" stroke-width="1.5"/><path d="M8 11 H10 M11.5 11 H13.5" stroke-width="1.5"/></svg>
<div class="t " style="left:187.25px;top:281px;">legend</div>
<div class="t" style="left:254.7px;top:281px;width:63.5px;overflow:hidden">CartesianPlotLegen</div>
<div class="a" style="left:152.05px;top:291.55px;width:166.45px;height:14.05px;background:#232629"></div>
<svg class="a" style="left:142.25px;top:294.48px" width="9" height="9" viewBox="0 0 16 16" fill="none" stroke="#d8dadc" stroke-width="1.5" ><path d="M3 6 L8 11 L13 6" stroke-width="1.4"/></svg>
<svg class="a" style="left:153.75px;top:294.28px" width="8.8" height="8.8" viewBox="0 0 16 16" fill="none" stroke="#fcfcfc" stroke-width="1.5" ><rect x="2.5" y="2.5" width="11" height="11" stroke-width="1.4"/><path d="M2.5 5.5 H13.5 M2.5 8.3 H13.5 M2.5 11 H13.5 M6.5 2.5 V13.5 M10 2.5 V13.5" stroke-width="1.1"/><rect x="2.5" y="2.5" width="11" height="3" fill="#fcfcfc" stroke="none"/></svg>
<div class="t " style="left:165.55px;top:295px;">ENSO-data</div>
<div class="t" style="left:254.7px;top:295px;width:63.5px;overflow:hidden">Spreadsheet</div>
<svg class="a" style="left:164.60px;top:308.33px" width="8.8" height="8.8" viewBox="0 0 16 16" fill="none" stroke="#fcfcfc" stroke-width="1.5" ><path d="M2.5 3.5 H13 M2.5 6.5 H13 M2.5 9.5 H9.5 M2.5 12.5 H8" stroke-width="1.5"/><path d="M12.5 10.5 V13.5" stroke-width="1.2"/></svg>
<div class="t " style="left:176.4px;top:309px;">y</div>
<div class="t" style="left:254.7px;top:309px;width:63.5px;overflow:hidden">Column</div>
<div class="a" style="left:162.9px;top:319.65px;width:155.60px;height:14.05px;background:#232629"></div>
<svg class="a" style="left:164.60px;top:322.38px" width="8.8" height="8.8" viewBox="0 0 16 16" fill="none" stroke="#fcfcfc" stroke-width="1.5" ><path d="M2.5 3.5 H13 M2.5 6.5 H13 M2.5 9.5 H9.5 M2.5 12.5 H8" stroke-width="1.5"/><path d="M12.5 10.5 V13.5" stroke-width="1.2"/></svg>
<div class="t " style="left:176.4px;top:323px;">x</div>
<div class="t" style="left:254.7px;top:323px;width:63.5px;overflow:hidden">Column</div>
<div class="a" style="left:135.4px;top:137px;width:1.00px;height:3.00px;background:#54595e"></div>
<div class="a" style="left:146.3px;top:151px;width:1.00px;height:3.50px;background:#54595e"></div>
<div class="a" style="left:146.3px;top:162px;width:1.00px;height:133.07px;background:#54595e"></div>
<div class="a" style="left:157.2px;top:165.5px;width:1.00px;height:3.00px;background:#54595e"></div>
<div class="a" style="left:168px;top:179px;width:1.00px;height:105.52px;background:#54595e"></div>
<div class="a" style="left:168px;top:185.675px;width:5.50px;height:1.00px;background:#54595e"></div>
<div class="a" style="left:168px;top:199.725px;width:5.50px;height:1.00px;background:#54595e"></div>
<div class="a" style="left:168px;top:213.775px;width:5.50px;height:1.00px;background:#54595e"></div>
<div class="a" style="left:168px;top:227.82500000000002px;width:5.50px;height:1.00px;background:#54595e"></div>
<div class="a" style="left:168px;top:241.87500000000003px;width:5.50px;height:1.00px;background:#54595e"></div>
<div class="a" style="left:168px;top:284.025px;width:5.50px;height:1.00px;background:#54595e"></div>
<div class="a" style="left:179px;top:263.425px;width:1.00px;height:7.05px;background:#54595e"></div>
<div class="a" style="left:179px;top:269.97499999999997px;width:5.50px;height:1.00px;background:#54595e"></div>
<div class="a" style="left:157.2px;top:305.575px;width:1.00px;height:21.10px;background:#54595e"></div>
<div class="a" style="left:157.2px;top:312.125px;width:5.30px;height:1.00px;background:#54595e"></div>
<div class="a" style="left:157.2px;top:326.17499999999995px;width:5.30px;height:1.00px;background:#54595e"></div>
<div class="a" style="left:131.5px;top:634px;width:187.00px;height:0.80px;background:#26292c"></div>
<svg class="a" style="left:131px;top:636px" width="18" height="11"><rect x="2.00" y="2.00" width="12.70" height="5.70" rx="2.9" fill="#5a5e62" stroke="#787c80" stroke-width="1.0"/></svg>
<div class="t " style="left:106.6px;top:651px;">x=147.107, y=0.994722</div>
<div class="t " style="left:1144px;top:651px;transform:translateX(-100%) scaleY(1.1);">Memory used 168 MB, peak 3.362 MB</div>
<div class="a" style="left:321px;top:87px;width:526.30px;height:561.40px;background:#2a2e32;border:1.3px solid #4b5055;border-top:none;border-radius:0 0 2px 2px"></div>
<div class="a" style="left:335px;top:117.7px;width:498.00px;height:498.00px;background:#fdf6e3"></div>
<svg class="a" style="left:335px;top:117px" width="498" height="499" viewBox="335 117 498 499" font-family="Liberation Sans, sans-serif"><rect x="351.2" y="134.2" width="465.5" height="465.3" fill="none" stroke="#4d6979" stroke-width="1"/><line x1="461.97" y1="183.7" x2="461.97" y2="549.6" stroke="#d3d2c5" stroke-width="0.65"/><line x1="522.93" y1="183.7" x2="522.93" y2="549.6" stroke="#d3d2c5" stroke-width="0.65"/><line x1="583.90" y1="183.7" x2="583.90" y2="549.6" stroke="#d3d2c5" stroke-width="0.65"/><line x1="644.87" y1="183.7" x2="644.87" y2="549.6" stroke="#d3d2c5" stroke-width="0.65"/><line x1="705.83" y1="183.7" x2="705.83" y2="549.6" stroke="#d3d2c5" stroke-width="0.65"/><line x1="401.0" y1="427.63" x2="766.8" y2="427.63" stroke="#d3d2c5" stroke-width="0.65"/><line x1="401.0" y1="305.67" x2="766.8" y2="305.67" stroke="#d3d2c5" stroke-width="0.65"/><line x1="401.0" y1="488.62" x2="766.8" y2="488.62" stroke="#d3d2c5" stroke-width="0.7" stroke-dasharray="3 1.3"/><line x1="401.0" y1="366.65" x2="766.8" y2="366.65" stroke="#d3d2c5" stroke-width="0.7" stroke-dasharray="3 1.3"/><line x1="401.0" y1="244.68" x2="766.8" y2="244.68" stroke="#d3d2c5" stroke-width="0.7" stroke-dasharray="3 1.3"/><circle cx="403.03" cy="287.37" r="3.15" fill="#dc1f1f"/><circle cx="405.06" cy="319.90" r="3.15" fill="#dc1f1f"/><circle cx="407.10" cy="334.13" r="3.15" fill="#dc1f1f"/><circle cx="409.13" cy="321.93" r="3.15" fill="#dc1f1f"/><circle cx="411.16" cy="328.03" r="3.15" fill="#dc1f1f"/><circle cx="413.19" cy="397.14" r="3.15" fill="#dc1f1f"/><circle cx="415.23" cy="393.08" r="3.15" fill="#dc1f1f"/><circle cx="417.26" cy="311.77" r="3.15" fill="#dc1f1f"/><circle cx="419.29" cy="287.37" r="3.15" fill="#dc1f1f"/><circle cx="421.32" cy="258.91" r="3.15" fill="#dc1f1f"/><circle cx="423.35" cy="328.03" r="3.15" fill="#dc1f1f"/><circle cx="425.39" cy="271.11" r="3.15" fill="#dc1f1f"/><circle cx="427.42" cy="201.99" r="3.15" fill="#dc1f1f"/><circle cx="429.45" cy="265.01" r="3.15" fill="#dc1f1f"/><circle cx="431.48" cy="238.58" r="3.15" fill="#dc1f1f"/><circle cx="433.52" cy="376.81" r="3.15" fill="#dc1f1f"/><circle cx="435.55" cy="433.73" r="3.15" fill="#dc1f1f"/><circle cx="437.58" cy="437.80" r="3.15" fill="#dc1f1f"/><circle cx="439.61" cy="395.11" r="3.15" fill="#dc1f1f"/><circle cx="441.64" cy="374.78" r="3.15" fill="#dc1f1f"/><circle cx="443.68" cy="401.21" r="3.15" fill="#dc1f1f"/><circle cx="445.71" cy="395.11" r="3.15" fill="#dc1f1f"/><circle cx="447.74" cy="291.44" r="3.15" fill="#dc1f1f"/><circle cx="449.77" cy="325.99" r="3.15" fill="#dc1f1f"/><circle cx="451.81" cy="291.44" r="3.15" fill="#dc1f1f"/><circle cx="453.84" cy="287.37" r="3.15" fill="#dc1f1f"/><circle cx="455.87" cy="285.34" r="3.15" fill="#dc1f1f"/><circle cx="457.90" cy="328.03" r="3.15" fill="#dc1f1f"/><circle cx="459.93" cy="338.19" r="3.15" fill="#dc1f1f"/><circle cx="461.97" cy="342.26" r="3.15" fill="#dc1f1f"/><circle cx="464.00" cy="386.98" r="3.15" fill="#dc1f1f"/><circle cx="466.03" cy="328.03" r="3.15" fill="#dc1f1f"/><circle cx="468.06" cy="273.14" r="3.15" fill="#dc1f1f"/><circle cx="470.10" cy="336.16" r="3.15" fill="#dc1f1f"/><circle cx="472.13" cy="362.58" r="3.15" fill="#dc1f1f"/><circle cx="474.16" cy="297.54" r="3.15" fill="#dc1f1f"/><circle cx="476.19" cy="291.44" r="3.15" fill="#dc1f1f"/><circle cx="478.22" cy="279.24" r="3.15" fill="#dc1f1f"/><circle cx="480.26" cy="344.29" r="3.15" fill="#dc1f1f"/><circle cx="482.29" cy="391.04" r="3.15" fill="#dc1f1f"/><circle cx="484.32" cy="452.03" r="3.15" fill="#dc1f1f"/><circle cx="486.35" cy="488.62" r="3.15" fill="#dc1f1f"/><circle cx="488.39" cy="498.78" r="3.15" fill="#dc1f1f"/><circle cx="490.42" cy="421.54" r="3.15" fill="#dc1f1f"/><circle cx="492.45" cy="352.42" r="3.15" fill="#dc1f1f"/><circle cx="494.48" cy="313.80" r="3.15" fill="#dc1f1f"/><circle cx="496.51" cy="374.78" r="3.15" fill="#dc1f1f"/><circle cx="498.55" cy="297.54" r="3.15" fill="#dc1f1f"/><circle cx="500.58" cy="336.16" r="3.15" fill="#dc1f1f"/><circle cx="502.61" cy="279.24" r="3.15" fill="#dc1f1f"/><circle cx="504.64" cy="338.19" r="3.15" fill="#dc1f1f"/><circle cx="506.68" cy="384.95" r="3.15" fill="#dc1f1f"/><circle cx="508.71" cy="474.39" r="3.15" fill="#dc1f1f"/><circle cx="510.74" cy="332.09" r="3.15" fill="#dc1f1f"/><circle cx="512.77" cy="445.93" r="3.15" fill="#dc1f1f"/><circle cx="514.80" cy="338.19" r="3.15" fill="#dc1f1f"/><circle cx="516.84" cy="328.03" r="3.15" fill="#dc1f1f"/><circle cx="518.87" cy="311.77" r="3.15" fill="#dc1f1f"/><circle cx="520.90" cy="317.86" r="3.15" fill="#dc1f1f"/><circle cx="522.93" cy="271.11" r="3.15" fill="#dc1f1f"/><circle cx="524.97" cy="262.98" r="3.15" fill="#dc1f1f"/><circle cx="527.00" cy="265.01" r="3.15" fill="#dc1f1f"/><circle cx="529.03" cy="295.50" r="3.15" fill="#dc1f1f"/><circle cx="531.06" cy="421.54" r="3.15" fill="#dc1f1f"/><circle cx="533.09" cy="354.45" r="3.15" fill="#dc1f1f"/><circle cx="535.13" cy="311.77" r="3.15" fill="#dc1f1f"/><circle cx="537.16" cy="447.96" r="3.15" fill="#dc1f1f"/><circle cx="539.19" cy="330.06" r="3.15" fill="#dc1f1f"/><circle cx="541.22" cy="291.44" r="3.15" fill="#dc1f1f"/><circle cx="543.26" cy="330.06" r="3.15" fill="#dc1f1f"/><circle cx="545.29" cy="309.73" r="3.15" fill="#dc1f1f"/><circle cx="547.32" cy="293.47" r="3.15" fill="#dc1f1f"/><circle cx="549.35" cy="230.45" r="3.15" fill="#dc1f1f"/><circle cx="551.38" cy="293.47" r="3.15" fill="#dc1f1f"/><circle cx="553.42" cy="248.75" r="3.15" fill="#dc1f1f"/><circle cx="555.45" cy="391.04" r="3.15" fill="#dc1f1f"/><circle cx="557.48" cy="405.27" r="3.15" fill="#dc1f1f"/><circle cx="559.51" cy="321.93" r="3.15" fill="#dc1f1f"/><circle cx="561.55" cy="384.95" r="3.15" fill="#dc1f1f"/><circle cx="563.58" cy="419.50" r="3.15" fill="#dc1f1f"/><circle cx="565.61" cy="443.90" r="3.15" fill="#dc1f1f"/><circle cx="567.64" cy="305.67" r="3.15" fill="#dc1f1f"/><circle cx="569.67" cy="342.26" r="3.15" fill="#dc1f1f"/><circle cx="571.71" cy="291.44" r="3.15" fill="#dc1f1f"/><circle cx="573.74" cy="342.26" r="3.15" fill="#dc1f1f"/><circle cx="575.77" cy="250.78" r="3.15" fill="#dc1f1f"/><circle cx="577.80" cy="301.60" r="3.15" fill="#dc1f1f"/><circle cx="579.84" cy="405.27" r="3.15" fill="#dc1f1f"/><circle cx="581.87" cy="433.73" r="3.15" fill="#dc1f1f"/><circle cx="583.90" cy="413.40" r="3.15" fill="#dc1f1f"/><circle cx="585.93" cy="470.32" r="3.15" fill="#dc1f1f"/><circle cx="587.96" cy="376.81" r="3.15" fill="#dc1f1f"/><circle cx="590.00" cy="380.88" r="3.15" fill="#dc1f1f"/><circle cx="592.03" cy="330.06" r="3.15" fill="#dc1f1f"/><circle cx="594.06" cy="210.13" r="3.15" fill="#dc1f1f"/><circle cx="596.09" cy="293.47" r="3.15" fill="#dc1f1f"/><circle cx="598.13" cy="295.50" r="3.15" fill="#dc1f1f"/><circle cx="600.16" cy="295.50" r="3.15" fill="#dc1f1f"/><circle cx="602.19" cy="350.39" r="3.15" fill="#dc1f1f"/><circle cx="604.22" cy="403.24" r="3.15" fill="#dc1f1f"/><circle cx="606.25" cy="466.26" r="3.15" fill="#dc1f1f"/><circle cx="608.29" cy="334.13" r="3.15" fill="#dc1f1f"/><circle cx="610.32" cy="344.29" r="3.15" fill="#dc1f1f"/><circle cx="612.35" cy="344.29" r="3.15" fill="#dc1f1f"/><circle cx="614.38" cy="307.70" r="3.15" fill="#dc1f1f"/><circle cx="616.42" cy="273.14" r="3.15" fill="#dc1f1f"/><circle cx="618.45" cy="218.26" r="3.15" fill="#dc1f1f"/><circle cx="620.48" cy="191.83" r="3.15" fill="#dc1f1f"/><circle cx="622.51" cy="234.52" r="3.15" fill="#dc1f1f"/><circle cx="624.54" cy="224.36" r="3.15" fill="#dc1f1f"/><circle cx="626.58" cy="240.62" r="3.15" fill="#dc1f1f"/><circle cx="628.61" cy="321.93" r="3.15" fill="#dc1f1f"/><circle cx="630.64" cy="258.91" r="3.15" fill="#dc1f1f"/><circle cx="632.67" cy="254.85" r="3.15" fill="#dc1f1f"/><circle cx="634.71" cy="376.81" r="3.15" fill="#dc1f1f"/><circle cx="636.74" cy="305.67" r="3.15" fill="#dc1f1f"/><circle cx="638.77" cy="291.44" r="3.15" fill="#dc1f1f"/><circle cx="640.80" cy="319.90" r="3.15" fill="#dc1f1f"/><circle cx="642.83" cy="254.85" r="3.15" fill="#dc1f1f"/><circle cx="644.87" cy="242.65" r="3.15" fill="#dc1f1f"/><circle cx="646.90" cy="338.19" r="3.15" fill="#dc1f1f"/><circle cx="648.93" cy="315.83" r="3.15" fill="#dc1f1f"/><circle cx="650.96" cy="277.21" r="3.15" fill="#dc1f1f"/><circle cx="653.00" cy="397.14" r="3.15" fill="#dc1f1f"/><circle cx="655.03" cy="537.40" r="3.15" fill="#dc1f1f"/><circle cx="657.06" cy="543.50" r="3.15" fill="#dc1f1f"/><circle cx="659.09" cy="437.80" r="3.15" fill="#dc1f1f"/><circle cx="661.12" cy="447.96" r="3.15" fill="#dc1f1f"/><circle cx="663.16" cy="456.09" r="3.15" fill="#dc1f1f"/><circle cx="665.19" cy="382.91" r="3.15" fill="#dc1f1f"/><circle cx="667.22" cy="348.36" r="3.15" fill="#dc1f1f"/><circle cx="669.25" cy="362.58" r="3.15" fill="#dc1f1f"/><circle cx="671.29" cy="295.50" r="3.15" fill="#dc1f1f"/><circle cx="673.32" cy="328.03" r="3.15" fill="#dc1f1f"/><circle cx="675.35" cy="348.36" r="3.15" fill="#dc1f1f"/><circle cx="677.38" cy="368.68" r="3.15" fill="#dc1f1f"/><circle cx="679.41" cy="395.11" r="3.15" fill="#dc1f1f"/><circle cx="681.45" cy="356.49" r="3.15" fill="#dc1f1f"/><circle cx="683.48" cy="378.85" r="3.15" fill="#dc1f1f"/><circle cx="685.51" cy="332.09" r="3.15" fill="#dc1f1f"/><circle cx="687.54" cy="273.14" r="3.15" fill="#dc1f1f"/><circle cx="689.58" cy="271.11" r="3.15" fill="#dc1f1f"/><circle cx="691.61" cy="271.11" r="3.15" fill="#dc1f1f"/><circle cx="693.64" cy="214.19" r="3.15" fill="#dc1f1f"/><circle cx="695.67" cy="208.09" r="3.15" fill="#dc1f1f"/><circle cx="697.70" cy="201.99" r="3.15" fill="#dc1f1f"/><circle cx="699.74" cy="236.55" r="3.15" fill="#dc1f1f"/><circle cx="701.77" cy="356.49" r="3.15" fill="#dc1f1f"/><circle cx="703.80" cy="425.60" r="3.15" fill="#dc1f1f"/><circle cx="705.83" cy="344.29" r="3.15" fill="#dc1f1f"/><circle cx="707.87" cy="360.55" r="3.15" fill="#dc1f1f"/><circle cx="709.90" cy="441.86" r="3.15" fill="#dc1f1f"/><circle cx="711.93" cy="321.93" r="3.15" fill="#dc1f1f"/><circle cx="713.96" cy="212.16" r="3.15" fill="#dc1f1f"/><circle cx="715.99" cy="232.49" r="3.15" fill="#dc1f1f"/><circle cx="718.03" cy="305.67" r="3.15" fill="#dc1f1f"/><circle cx="720.06" cy="315.83" r="3.15" fill="#dc1f1f"/><circle cx="722.09" cy="374.78" r="3.15" fill="#dc1f1f"/><circle cx="724.12" cy="269.08" r="3.15" fill="#dc1f1f"/><circle cx="726.16" cy="372.75" r="3.15" fill="#dc1f1f"/><circle cx="728.19" cy="374.78" r="3.15" fill="#dc1f1f"/><circle cx="730.22" cy="374.78" r="3.15" fill="#dc1f1f"/><circle cx="732.25" cy="372.75" r="3.15" fill="#dc1f1f"/><circle cx="734.28" cy="289.40" r="3.15" fill="#dc1f1f"/><circle cx="736.32" cy="281.27" r="3.15" fill="#dc1f1f"/><circle cx="738.35" cy="265.01" r="3.15" fill="#dc1f1f"/><circle cx="740.38" cy="277.21" r="3.15" fill="#dc1f1f"/><circle cx="742.41" cy="248.75" r="3.15" fill="#dc1f1f"/><path d="M403.03,267.37 L403.54,285.77 L404.05,281.30 L404.56,287.24 L405.06,292.98 L405.57,297.32 L406.08,316.81 L406.59,311.05 L407.10,314.92 L407.60,344.96 L408.11,337.82 L408.62,337.71 L409.13,365.00 L409.64,363.74 L410.14,366.08 L410.65,378.31 L411.16,379.68 L411.67,392.71 L412.18,389.09 L412.69,384.32 L413.19,406.88 L413.70,396.74 L414.21,383.20 L414.72,403.54 L415.23,394.87 L415.73,380.79 L416.24,387.17 L416.75,378.34 L417.26,374.93 L417.77,366.56 L418.27,350.34 L418.78,359.88 L419.29,346.30 L419.80,321.28 L420.31,334.56 L420.81,324.51 L421.32,300.32 L421.83,306.38 L422.34,298.84 L422.85,288.64 L423.35,285.94 L423.86,273.41 L424.37,281.47 L424.88,278.21 L425.39,258.08 L425.89,276.13 L426.40,279.64 L426.91,260.33 L427.42,276.54 L427.93,284.13 L428.44,278.34 L428.94,288.95 L429.45,290.71 L429.96,302.99 L430.47,313.73 L430.98,304.17 L431.48,326.37 L431.99,342.67 L432.50,327.93 L433.01,347.61 L433.52,365.22 L434.02,357.48 L434.53,369.79 L435.04,377.16 L435.55,382.11 L436.06,392.18 L436.56,382.20 L437.07,393.62 L437.58,407.23 L438.09,385.34 L438.60,392.52 L439.10,406.32 L439.61,385.73 L440.12,385.29 L440.63,388.25 L441.14,377.34 L441.64,376.08 L442.15,360.97 L442.66,356.73 L443.17,362.48 L443.68,334.63 L444.18,328.89 L444.69,340.08 L445.20,313.40 L445.71,304.34 L446.22,310.40 L446.72,294.78 L447.23,290.29 L447.74,282.78 L448.25,276.64 L448.76,285.47 L449.27,267.59 L449.77,263.19 L450.28,284.00 L450.79,267.78 L451.30,262.73 L451.81,283.68 L452.31,277.87 L452.82,279.23 L453.33,288.98 L453.84,291.10 L454.35,307.20 L454.85,305.35 L455.36,306.51 L455.87,335.72 L456.38,331.39 L456.89,327.95 L457.39,357.52 L457.90,357.95 L458.41,356.47 L458.92,373.25 L459.43,375.54 L459.93,385.24 L460.44,386.84 L460.95,382.09 L461.46,403.24 L461.97,397.73 L462.47,382.72 L462.98,404.33 L463.49,399.35 L464.00,382.07 L464.51,391.86 L465.01,385.76 L465.52,378.25 L466.03,374.07 L466.54,359.20 L467.05,365.31 L467.56,355.60 L468.06,329.67 L468.57,341.38 L469.08,334.58 L469.59,306.82 L470.10,313.19 L470.60,308.32 L471.11,292.67 L471.62,291.36 L472.13,280.49 L472.64,282.98 L473.14,281.53 L473.65,261.10 L474.16,275.04 L474.67,280.80 L475.18,258.58 L475.68,272.69 L476.19,283.18 L476.70,272.45 L477.21,282.61 L477.72,287.45 L478.22,294.37 L478.73,305.99 L479.24,298.48 L479.75,316.50 L480.26,335.17 L480.76,320.38 L481.27,337.70 L481.78,359.41 L482.29,349.48 L482.80,361.02 L483.31,373.64 L483.81,375.37 L484.32,386.01 L484.83,380.90 L485.34,389.33 L485.85,405.12 L486.35,386.08 L486.86,391.04 L487.37,408.96 L487.88,388.60 L488.39,386.49 L488.89,395.02 L489.40,382.36 L489.91,379.90 L490.42,370.26 L490.93,363.28 L491.43,368.88 L491.94,344.63 L492.45,335.66 L492.96,348.52 L493.47,322.72 L493.97,309.93 L494.48,319.48 L494.99,302.43 L495.50,293.92 L496.01,290.57 L496.51,281.58 L497.02,287.13 L497.53,272.50 L498.04,264.34 L498.55,283.95 L499.05,269.17 L499.56,259.49 L500.07,281.89 L500.58,275.91 L501.09,272.12 L501.60,285.23 L502.10,286.23 L502.61,297.81 L503.12,299.82 L503.63,299.11 L504.14,326.05 L504.64,325.00 L505.15,318.67 L505.66,349.08 L506.17,352.07 L506.68,346.67 L507.18,366.90 L507.69,371.19 L508.20,376.90 L508.71,383.16 L509.22,379.58 L509.72,398.20 L510.23,397.38 L510.74,381.89 L511.25,403.46 L511.76,402.77 L512.26,382.91 L512.77,394.93 L513.28,392.61 L513.79,381.07 L514.30,380.26 L514.80,368.07 L515.31,370.23 L515.82,364.06 L516.33,338.63 L516.84,347.82 L517.34,344.45 L517.85,314.28 L518.36,319.84 L518.87,318.31 L519.38,297.85 L519.88,296.87 L520.39,288.75 L520.90,285.64 L521.41,285.17 L521.92,265.76 L522.43,274.95 L522.93,282.48 L523.44,258.64 L523.95,269.56 L524.46,282.92 L524.97,268.16 L525.47,276.59 L525.98,285.02 L526.49,286.90 L527.00,298.11 L527.51,293.63 L528.01,307.17 L528.52,327.13 L529.03,313.49 L529.54,327.63 L530.05,352.79 L530.55,341.79 L531.06,351.41 L531.57,369.24 L532.08,368.52 L532.59,378.43 L533.09,378.78 L533.60,384.54 L534.11,401.24 L534.62,386.18 L535.13,388.73 L535.63,409.80 L536.14,391.03 L536.65,386.66 L537.16,400.34 L537.67,387.18 L538.17,382.58 L538.68,378.68 L539.19,369.91 L539.70,374.21 L540.21,354.46 L540.72,342.78 L541.22,356.18 L541.73,332.55 L542.24,316.04 L542.75,328.26 L543.26,311.16 L543.76,298.12 L544.27,298.64 L544.78,288.03 L545.29,289.30 L545.80,278.21 L546.30,267.20 L546.81,284.30 L547.32,271.72 L547.83,257.85 L548.34,280.42 L548.84,275.31 L549.35,266.18 L549.86,281.72 L550.37,282.71 L550.88,288.98 L551.38,294.40 L551.89,292.87 L552.40,316.23 L552.91,318.58 L553.42,310.12 L553.92,339.88 L554.43,346.00 L554.94,336.99 L555.45,359.34 L555.96,366.59 L556.46,368.00 L556.97,378.03 L557.48,376.79 L557.99,392.01 L558.50,395.53 L559.01,380.76 L559.51,401.09 L560.02,404.90 L560.53,383.40 L561.04,396.40 L561.55,398.60 L562.05,383.47 L562.56,385.00 L563.07,376.69 L563.58,374.74 L564.09,371.44 L564.59,347.96 L565.10,353.93 L565.61,353.80 L566.12,322.60 L566.63,326.33 L567.13,328.48 L567.64,304.19 L568.15,302.41 L568.66,297.90 L569.17,289.55 L569.67,289.02 L570.18,271.89 L570.69,276.03 L571.20,284.54 L571.71,260.45 L572.21,267.37 L572.72,283.22 L573.23,265.58 L573.74,271.12 L574.25,283.29 L574.75,280.81 L575.26,290.28 L575.77,289.53 L576.28,298.69 L576.79,318.66 L577.30,307.24 L577.80,317.76 L578.31,345.38 L578.82,334.48 L579.33,341.29 L579.84,363.87 L580.34,361.71 L580.85,369.67 L581.36,375.71 L581.87,379.44 L582.38,395.71 L582.88,385.45 L583.39,385.81 L583.90,408.83 L584.41,392.84 L584.92,385.96 L585.42,404.01 L585.93,391.67 L586.44,384.24 L586.95,385.93 L587.46,376.55 L587.96,378.49 L588.47,363.74 L588.98,350.24 L589.49,362.98 L590.00,342.53 L590.50,322.73 L591.01,336.57 L591.52,320.71 L592.03,302.98 L592.54,306.75 L593.04,295.85 L593.55,292.09 L594.06,284.46 L594.57,271.76 L595.08,285.17 L595.59,275.23 L596.09,257.95 L596.60,279.34 L597.11,275.92 L597.62,261.68 L598.13,278.46 L598.63,280.51 L599.14,281.02 L599.65,289.08 L600.16,287.85 L600.67,306.60 L601.17,312.06 L601.68,302.48 L602.19,330.21 L602.70,339.69 L603.21,327.71 L603.71,350.77 L604.22,361.65 L604.73,358.85 L605.24,371.49 L605.75,373.65 L606.25,384.96 L606.76,392.10 L607.27,379.30 L607.78,397.41 L608.29,405.53 L608.79,383.56 L609.30,396.36 L609.81,403.46 L610.32,385.52 L610.83,388.25 L611.34,384.75 L611.84,378.91 L612.35,377.57 L612.86,357.39 L613.37,359.80 L613.88,362.35 L614.38,331.61 L614.89,332.72 L615.40,338.47 L615.91,311.62 L616.42,308.01 L616.92,307.60 L617.43,294.76 L617.94,293.06 L618.45,279.20 L618.96,278.44 L619.46,286.90 L619.97,263.86 L620.48,266.34 L620.99,283.95 L621.50,264.73 L622.00,266.44 L622.51,282.13 L623.02,276.26 L623.53,282.73 L624.04,286.08 L624.54,291.33 L625.05,309.92 L625.56,301.59 L626.07,308.43 L626.58,337.24 L627.08,327.59 L627.59,331.02 L628.10,357.52 L628.61,355.03 L629.12,360.04 L629.62,371.58 L630.13,374.17 L630.64,388.71 L631.15,383.73 L631.66,382.46 L632.17,406.06 L632.67,393.86 L633.18,384.58 L633.69,405.92 L634.20,395.64 L634.71,385.02 L635.21,391.75 L635.72,383.06 L636.23,381.81 L636.74,372.17 L637.25,357.97 L637.75,368.90 L638.26,352.33 L638.77,330.01 L639.28,344.29 L639.79,330.75 L640.29,308.59 L640.80,314.69 L641.31,304.81 L641.82,295.63 L642.33,291.02 L642.83,277.93 L643.34,286.69 L643.85,279.44 L644.36,259.85 L644.87,278.76 L645.37,277.54 L645.88,258.83 L646.39,275.54 L646.90,279.51 L647.41,274.24 L647.91,283.88 L648.42,284.05 L648.93,297.50 L649.44,305.43 L649.95,295.89 L650.46,320.38 L650.96,333.06 L651.47,319.03 L651.98,341.40 L652.49,356.28 L653.00,349.74 L653.50,363.67 L654.01,370.07 L654.52,377.34 L655.03,387.07 L655.54,377.45 L656.04,392.66 L656.55,404.52 L657.06,383.37 L657.57,394.94 L658.08,406.94 L658.58,387.26 L659.09,390.03 L659.60,391.96 L660.11,382.81 L660.62,382.34 L661.12,366.62 L661.63,365.49 L662.14,369.87 L662.65,341.05 L663.16,339.07 L663.66,348.00 L664.17,319.99 L664.68,313.70 L665.19,317.52 L665.70,301.26 L666.20,297.28 L666.71,287.41 L667.22,282.28 L667.73,289.52 L668.24,268.68 L668.75,266.66 L669.25,285.02 L669.76,265.51 L670.27,262.81 L670.78,281.42 L671.29,273.32 L671.79,275.74 L672.30,283.17 L672.81,285.30 L673.32,301.13 L673.83,296.46 L674.33,299.95 L674.84,328.53 L675.35,321.07 L675.86,320.93 L676.37,350.22 L676.87,348.52 L677.38,349.87 L677.89,366.32 L678.40,368.83 L678.91,380.50 L679.41,380.87 L679.92,378.80 L680.43,401.63 L680.94,393.87 L681.45,382.69 L681.95,406.03 L682.46,398.90 L682.97,385.07 L683.48,395.99 L683.99,389.26 L684.49,384.26 L685.00,379.46 L685.51,365.85 L686.02,373.97 L686.53,361.58 L687.04,337.83 L687.54,351.37 L688.05,340.96 L688.56,314.99 L689.07,322.34 L689.58,314.61 L690.08,300.03 L690.59,297.69 L691.10,285.54 L691.61,289.00 L692.12,284.15 L692.62,263.52 L693.13,278.85 L693.64,279.98 L694.15,257.75 L694.66,273.09 L695.16,279.56 L695.67,268.89 L696.18,278.88 L696.69,281.42 L697.20,289.26 L697.70,298.71 L698.21,290.37 L698.72,310.73 L699.23,326.07 L699.74,311.13 L700.24,331.55 L700.75,350.40 L701.26,340.90 L701.77,354.75 L702.28,365.96 L702.78,369.43 L703.29,380.51 L703.80,375.13 L704.31,387.12 L704.82,401.78 L705.33,382.78 L705.83,392.35 L706.34,408.82 L706.85,388.66 L707.36,390.44 L707.87,398.01 L708.37,386.46 L708.88,385.73 L709.39,375.32 L709.90,371.07 L710.41,376.23 L710.91,350.64 L711.42,345.47 L711.93,356.80 L712.44,329.10 L712.95,319.57 L713.45,327.34 L713.96,308.94 L714.47,301.74 L714.98,296.21 L715.49,287.57 L715.99,292.40 L716.50,274.65 L717.01,268.49 L717.52,286.41 L718.03,267.80 L718.53,260.48 L719.04,281.10 L719.55,271.98 L720.06,269.57 L720.57,280.69 L721.07,280.73 L721.58,292.57 L722.09,291.75 L722.60,292.55 L723.11,319.44 L723.62,314.88 L724.12,311.37 L724.63,342.07 L725.14,342.16 L725.65,339.51 L726.16,359.93 L726.66,363.47 L727.17,371.39 L727.68,376.77 L728.19,374.95 L728.70,395.73 L729.20,392.70 L729.71,380.42 L730.22,404.41 L730.73,401.22 L731.24,384.56 L731.74,398.52 L732.25,394.93 L732.76,385.99 L733.27,385.36 L733.78,373.70 L734.28,378.27 L734.79,369.97 L735.30,346.11 L735.81,357.80 L736.32,350.95 L736.82,322.17 L737.33,329.62 L737.84,324.94 L738.35,305.36 L738.86,304.32 L739.37,294.35 L739.87,292.25 L740.38,289.16 L740.89,268.87 L741.40,279.75 L741.91,283.03 L742.41,258.49" fill="none" stroke="#35a07c" stroke-width="1.9" stroke-linejoin="round"/><path d="M403.03,267.37 L403.54,285.77 L404.05,281.30 L404.56,287.24 L405.06,292.98 L405.57,297.32 L406.08,316.81 L406.59,311.05 L407.10,314.92 L407.60,344.96 L408.11,337.82 L408.62,337.71 L409.13,365.00 L409.64,363.74 L410.14,366.08 L410.65,378.31 L411.16,379.68 L411.67,392.71 L412.18,389.09 L412.69,384.32 L413.19,406.88 L413.70,396.74 L414.21,383.20 L414.72,403.54 L415.23,394.87 L415.73,380.79 L416.24,387.17 L416.75,378.34 L417.26,374.93 L417.77,366.56 L418.27,350.34 L418.78,359.88 L419.29,346.30 L419.80,321.28 L420.31,334.56 L420.81,324.51 L421.32,300.32 L421.83,306.38 L422.34,298.84 L422.85,288.64 L423.35,285.94 L423.86,273.41 L424.37,281.47 L424.88,278.21 L425.39,258.08 L425.89,276.13 L426.40,279.64 L426.91,260.33 L427.42,276.54 L427.93,284.13 L428.44,278.34 L428.94,288.95 L429.45,290.71 L429.96,302.99 L430.47,313.73 L430.98,304.17 L431.48,326.37 L431.99,342.67 L432.50,327.93 L433.01,347.61 L433.52,365.22 L434.02,357.48 L434.53,369.79 L435.04,377.16 L435.55,382.11 L436.06,392.18 L436.56,382.20 L437.07,393.62 L437.58,407.23 L438.09,385.34 L438.60,392.52 L439.10,406.32 L439.61,385.73 L440.12,385.29 L440.63,388.25 L441.14,377.34 L441.64,376.08 L442.15,360.97 L442.66,356.73 L443.17,362.48 L443.68,334.63 L444.18,328.89 L444.69,340.08 L445.20,313.40 L445.71,304.34 L446.22,310.40 L446.72,294.78 L447.23,290.29 L447.74,282.78 L448.25,276.64 L448.76,285.47 L449.27,267.59 L449.77,263.19 L450.28,284.00 L450.79,267.78 L451.30,262.73 L451.81,283.68 L452.31,277.87 L452.82,279.23 L453.33,288.98 L453.84,291.10 L454.35,307.20 L454.85,305.35 L455.36,306.51 L455.87,335.72 L456.38,331.39 L456.89,327.95 L457.39,357.52 L457.90,357.95 L458.41,356.47 L458.92,373.25 L459.43,375.54 L459.93,385.24 L460.44,386.84 L460.95,382.09 L461.46,403.24 L461.97,397.73 L462.47,382.72 L462.98,404.33 L463.49,399.35 L464.00,382.07 L464.51,391.86 L465.01,385.76 L465.52,378.25 L466.03,374.07 L466.54,359.20 L467.05,365.31 L467.56,355.60 L468.06,329.67 L468.57,341.38 L469.08,334.58 L469.59,306.82 L470.10,313.19 L470.60,308.32 L471.11,292.67 L471.62,291.36 L472.13,280.49 L472.64,282.98 L473.14,281.53 L473.65,261.10 L474.16,275.04 L474.67,280.80 L475.18,258.58 L475.68,272.69 L476.19,283.18 L476.70,272.45 L477.21,282.61 L477.72,287.45 L478.22,294.37 L478.73,305.99 L479.24,298.48 L479.75,316.50 L480.26,335.17 L480.76,320.38 L481.27,337.70 L481.78,359.41 L482.29,349.48 L482.80,361.02 L483.31,373.64 L483.81,375.37 L484.32,386.01 L484.83,380.90 L485.34,389.33 L485.85,405.12 L486.35,386.08 L486.86,391.04 L487.37,408.96 L487.88,388.60 L488.39,386.49 L488.89,395.02 L489.40,382.36 L489.91,379.90 L490.42,370.26 L490.93,363.28 L491.43,368.88 L491.94,344.63 L492.45,335.66 L492.96,348.52 L493.47,322.72 L493.97,309.93 L494.48,319.48 L494.99,302.43 L495.50,293.92 L496.01,290.57 L496.51,281.58 L497.02,287.13 L497.53,272.50 L498.04,264.34 L498.55,283.95 L499.05,269.17 L499.56,259.49 L500.07,281.89 L500.58,275.91 L501.09,272.12 L501.60,285.23 L502.10,286.23 L502.61,297.81 L503.12,299.82 L503.63,299.11 L504.14,326.05 L504.64,325.00 L505.15,318.67 L505.66,349.08 L506.17,352.07 L506.68,346.67 L507.18,366.90 L507.69,371.19 L508.20,376.90 L508.71,383.16 L509.22,379.58 L509.72,398.20 L510.23,397.38 L510.74,381.89 L511.25,403.46 L511.76,402.77 L512.26,382.91 L512.77,394.93 L513.28,392.61 L513.79,381.07 L514.30,380.26 L514.80,368.07 L515.31,370.23 L515.82,364.06 L516.33,338.63 L516.84,347.82 L517.34,344.45 L517.85,314.28 L518.36,319.84 L518.87,318.31 L519.38,297.85 L519.88,296.87 L520.39,288.75 L520.90,285.64 L521.41,285.17 L521.92,265.76 L522.43,274.95 L522.93,282.48 L523.44,258.64 L523.95,269.56 L524.46,282.92 L524.97,268.16 L525.47,276.59 L525.98,285.02 L526.49,286.90 L527.00,298.11 L527.51,293.63 L528.01,307.17 L528.52,327.13 L529.03,313.49 L529.54,327.63 L530.05,352.79 L530.55,341.79 L531.06,351.41 L531.57,369.24 L532.08,368.52 L532.59,378.43 L533.09,378.78 L533.60,384.54 L534.11,401.24 L534.62,386.18 L535.13,388.73 L535.63,409.80 L536.14,391.03 L536.65,386.66 L537.16,400.34 L537.67,387.18 L538.17,382.58 L538.68,378.68 L539.19,369.91 L539.70,374.21 L540.21,354.46 L540.72,342.78 L541.22,356.18 L541.73,332.55 L542.24,316.04 L542.75,328.26 L543.26,311.16 L543.76,298.12 L544.27,298.64 L544.78,288.03 L545.29,289.30 L545.80,278.21 L546.30,267.20 L546.81,284.30 L547.32,271.72 L547.83,257.85 L548.34,280.42 L548.84,275.31 L549.35,266.18 L549.86,281.72 L550.37,282.71 L550.88,288.98 L551.38,294.40 L551.89,292.87 L552.40,316.23 L552.91,318.58 L553.42,310.12 L553.92,339.88 L554.43,346.00 L554.94,336.99 L555.45,359.34 L555.96,366.59 L556.46,368.00 L556.97,378.03 L557.48,376.79 L557.99,392.01 L558.50,395.53 L559.01,380.76 L559.51,401.09 L560.02,404.90 L560.53,383.40 L561.04,396.40 L561.55,398.60 L562.05,383.47 L562.56,385.00 L563.07,376.69 L563.58,374.74 L564.09,371.44 L564.59,347.96 L565.10,353.93 L565.61,353.80 L566.12,322.60 L566.63,326.33 L567.13,328.48 L567.64,304.19 L568.15,302.41 L568.66,297.90 L569.17,289.55 L569.67,289.02 L570.18,271.89 L570.69,276.03 L571.20,284.54 L571.71,260.45 L572.21,267.37 L572.72,283.22 L573.23,265.58 L573.74,271.12 L574.25,283.29 L574.75,280.81 L575.26,290.28 L575.77,289.53 L576.28,298.69 L576.79,318.66 L577.30,307.24 L577.80,317.76 L578.31,345.38 L578.82,334.48 L579.33,341.29 L579.84,363.87 L580.34,361.71 L580.85,369.67 L581.36,375.71 L581.87,379.44 L582.38,395.71 L582.88,385.45 L583.39,385.81 L583.90,408.83 L584.41,392.84 L584.92,385.96 L585.42,404.01 L585.93,391.67 L586.44,384.24 L586.95,385.93 L587.46,376.55 L587.96,378.49 L588.47,363.74 L588.98,350.24 L589.49,362.98 L590.00,342.53 L590.50,322.73 L591.01,336.57 L591.52,320.71 L592.03,302.98 L592.54,306.75 L593.04,295.85 L593.55,292.09 L594.06,284.46 L594.57,271.76 L595.08,285.17 L595.59,275.23 L596.09,257.95 L596.60,279.34 L597.11,275.92 L597.62,261.68 L598.13,278.46 L598.63,280.51 L599.14,281.02 L599.65,289.08 L600.16,287.85 L600.67,306.60 L601.17,312.06 L601.68,302.48 L602.19,330.21 L602.70,339.69 L603.21,327.71 L603.71,350.77 L604.22,361.65 L604.73,358.85 L605.24,371.49 L605.75,373.65 L606.25,384.96 L606.76,392.10 L607.27,379.30 L607.78,397.41 L608.29,405.53 L608.79,383.56 L609.30,396.36 L609.81,403.46 L610.32,385.52 L610.83,388.25 L611.34,384.75 L611.84,378.91 L612.35,377.57 L612.86,357.39 L613.37,359.80 L613.88,362.35 L614.38,331.61 L614.89,332.72 L615.40,338.47 L615.91,311.62 L616.42,308.01 L616.92,307.60 L617.43,294.76 L617.94,293.06 L618.45,279.20 L618.96,278.44 L619.46,286.90 L619.97,263.86 L620.48,266.34 L620.99,283.95 L621.50,264.73 L622.00,266.44 L622.51,282.13 L623.02,276.26 L623.53,282.73 L624.04,286.08 L624.54,291.33 L625.05,309.92 L625.56,301.59 L626.07,308.43 L626.58,337.24 L627.08,327.59 L627.59,331.02 L628.10,357.52 L628.61,355.03 L629.12,360.04 L629.62,371.58 L630.13,374.17 L630.64,388.71 L631.15,383.73 L631.66,382.46 L632.17,406.06 L632.67,393.86 L633.18,384.58 L633.69,405.92 L634.20,395.64 L634.71,385.02 L635.21,391.75 L635.72,383.06 L636.23,381.81 L636.74,372.17 L637.25,357.97 L637.75,368.90 L638.26,352.33 L638.77,330.01 L639.28,344.29 L639.79,330.75 L640.29,308.59 L640.80,314.69 L641.31,304.81 L641.82,295.63 L642.33,291.02 L642.83,277.93 L643.34,286.69 L643.85,279.44 L644.36,259.85 L644.87,278.76 L645.37,277.54 L645.88,258.83 L646.39,275.54 L646.90,279.51 L647.41,274.24 L647.91,283.88 L648.42,284.05 L648.93,297.50 L649.44,305.43 L649.95,295.89 L650.46,320.38 L650.96,333.06 L651.47,319.03 L651.98,341.40 L652.49,356.28 L653.00,349.74 L653.50,363.67 L654.01,370.07 L654.52,377.34 L655.03,387.07 L655.54,377.45 L656.04,392.66 L656.55,404.52 L657.06,383.37 L657.57,394.94 L658.08,406.94 L658.58,387.26 L659.09,390.03 L659.60,391.96 L660.11,382.81 L660.62,382.34 L661.12,366.62 L661.63,365.49 L662.14,369.87 L662.65,341.05 L663.16,339.07 L663.66,348.00 L664.17,319.99 L664.68,313.70 L665.19,317.52 L665.70,301.26 L666.20,297.28 L666.71,287.41 L667.22,282.28 L667.73,289.52 L668.24,268.68 L668.75,266.66 L669.25,285.02 L669.76,265.51 L670.27,262.81 L670.78,281.42 L671.29,273.32 L671.79,275.74 L672.30,283.17 L672.81,285.30 L673.32,301.13 L673.83,296.46 L674.33,299.95 L674.84,328.53 L675.35,321.07 L675.86,320.93 L676.37,350.22 L676.87,348.52 L677.38,349.87 L677.89,366.32 L678.40,368.83 L678.91,380.50 L679.41,380.87 L679.92,378.80 L680.43,401.63 L680.94,393.87 L681.45,382.69 L681.95,406.03 L682.46,398.90 L682.97,385.07 L683.48,395.99 L683.99,389.26 L684.49,384.26 L685.00,379.46 L685.51,365.85 L686.02,373.97 L686.53,361.58 L687.04,337.83 L687.54,351.37 L688.05,340.96 L688.56,314.99 L689.07,322.34 L689.58,314.61 L690.08,300.03 L690.59,297.69 L691.10,285.54 L691.61,289.00 L692.12,284.15 L692.62,263.52 L693.13,278.85 L693.64,279.98 L694.15,257.75 L694.66,273.09 L695.16,279.56 L695.67,268.89 L696.18,278.88 L696.69,281.42 L697.20,289.26 L697.70,298.71 L698.21,290.37 L698.72,310.73 L699.23,326.07 L699.74,311.13 L700.24,331.55 L700.75,350.40 L701.26,340.90 L701.77,354.75 L702.28,365.96 L702.78,369.43 L703.29,380.51 L703.80,375.13 L704.31,387.12 L704.82,401.78 L705.33,382.78 L705.83,392.35 L706.34,408.82 L706.85,388.66 L707.36,390.44 L707.87,398.01 L708.37,386.46 L708.88,385.73 L709.39,375.32 L709.90,371.07 L710.41,376.23 L710.91,350.64 L711.42,345.47 L711.93,356.80 L712.44,329.10 L712.95,319.57 L713.45,327.34 L713.96,308.94 L714.47,301.74 L714.98,296.21 L715.49,287.57 L715.99,292.40 L716.50,274.65 L717.01,268.49 L717.52,286.41 L718.03,267.80 L718.53,260.48 L719.04,281.10 L719.55,271.98 L720.06,269.57 L720.57,280.69 L721.07,280.73 L721.58,292.57 L722.09,291.75 L722.60,292.55 L723.11,319.44 L723.62,314.88 L724.12,311.37 L724.63,342.07 L725.14,342.16 L725.65,339.51 L726.16,359.93 L726.66,363.47 L727.17,371.39 L727.68,376.77 L728.19,374.95 L728.70,395.73 L729.20,392.70 L729.71,380.42 L730.22,404.41 L730.73,401.22 L731.24,384.56 L731.74,398.52 L732.25,394.93 L732.76,385.99 L733.27,385.36 L733.78,373.70 L734.28,378.27 L734.79,369.97 L735.30,346.11 L735.81,357.80 L736.32,350.95 L736.82,322.17 L737.33,329.62 L737.84,324.94 L738.35,305.36 L738.86,304.32 L739.37,294.35 L739.87,292.25 L740.38,289.16 L740.89,268.87 L741.40,279.75 L741.91,283.03 L742.41,258.49" fill="none" stroke="#2fa7e0" stroke-width="0.6" stroke-opacity="0.3" stroke-linejoin="round"/><path d="M403.03,267.74 L403.54,271.23 L404.05,280.02 L404.56,287.19 L405.06,293.82 L405.57,300.53 L406.08,307.81 L406.59,315.52 L407.10,323.54 L407.60,331.72 L408.11,339.93 L408.62,348.03 L409.13,355.87 L409.64,363.33 L410.14,370.27 L410.65,376.58 L411.16,378.77 L411.67,381.83 L412.18,385.74 L412.69,383.52 L413.19,389.29 L413.70,387.33 L414.21,385.91 L414.72,389.09 L415.23,382.96 L415.73,383.39 L416.24,380.84 L416.75,378.19 L417.26,372.75 L417.77,366.03 L418.27,358.75 L418.78,351.04 L419.29,343.02 L419.80,334.84 L420.31,326.63 L420.81,318.53 L421.32,310.69 L421.83,303.23 L422.34,296.29 L422.85,289.98 L423.35,280.71 L423.86,276.10 L424.37,268.80 L424.88,264.38 L425.39,265.64 L425.89,259.52 L426.40,263.74 L426.91,265.19 L427.42,265.75 L427.93,274.33 L428.44,278.05 L428.94,287.30 L429.45,293.82 L429.96,300.53 L430.47,307.81 L430.98,315.52 L431.48,323.54 L431.99,331.72 L432.50,339.93 L433.01,348.03 L433.52,355.87 L434.02,363.33 L434.53,370.27 L435.04,376.58 L435.55,379.06 L436.06,383.36 L436.56,382.12 L437.07,387.39 L437.58,387.65 L438.09,385.50 L438.60,390.23 L439.10,384.77 L439.61,385.00 L440.12,384.07 L440.63,379.08 L441.14,378.45 L441.64,372.75 L442.15,366.03 L442.66,358.75 L443.17,351.04 L443.68,343.02 L444.18,334.84 L444.69,326.63 L445.20,318.53 L445.71,310.69 L446.22,303.23 L446.72,296.29 L447.23,289.98 L447.74,282.23 L448.25,274.74 L448.76,267.87 L449.27,268.02 L449.77,260.99 L450.28,262.52 L450.79,264.10 L451.30,261.91 L451.81,269.76 L452.31,271.90 L452.82,278.27 L453.33,287.46 L453.84,293.82 L454.35,300.53 L454.85,307.81 L455.36,315.52 L455.87,323.54 L456.38,331.72 L456.89,339.93 L457.39,348.03 L457.90,355.87 L458.41,363.33 L458.92,370.27 L459.43,376.58 L459.93,380.28 L460.44,380.48 L460.95,384.81 L461.46,387.14 L461.97,384.68 L462.47,390.30 L462.98,386.26 L463.49,385.82 L464.00,386.94 L464.51,380.99 L465.01,381.05 L465.52,378.34 L466.03,372.75 L466.54,366.03 L467.05,358.75 L467.56,351.04 L468.06,343.02 L468.57,334.84 L469.08,326.63 L469.59,318.53 L470.10,310.69 L470.60,303.23 L471.11,296.29 L471.62,289.98 L472.13,281.92 L472.64,273.23 L473.14,271.48 L473.65,264.12 L474.16,262.69 L474.67,264.28 L475.18,259.80 L475.68,266.23 L476.19,267.69 L476.70,271.27 L477.21,280.01 L477.72,287.19 L478.22,293.82 L478.73,300.53 L479.24,307.81 L479.75,315.52 L480.26,323.54 L480.76,331.72 L481.27,339.93 L481.78,348.03 L482.29,355.87 L482.80,363.33 L483.31,370.27 L483.81,376.58 L484.32,378.75 L484.83,381.87 L485.34,385.70 L485.85,383.53 L486.35,389.33 L486.86,387.26 L487.37,385.96 L487.88,389.07 L488.39,382.94 L488.89,383.44 L489.40,380.81 L489.91,378.19 L490.42,372.75 L490.93,366.03 L491.43,358.75 L491.94,351.04 L492.45,343.02 L492.96,334.84 L493.47,326.63 L493.97,318.53 L494.48,310.69 L494.99,303.23 L495.50,296.29 L496.01,289.98 L496.51,280.72 L497.02,276.12 L497.53,268.75 L498.04,264.43 L498.55,265.61 L499.05,259.49 L499.56,263.80 L500.07,265.13 L500.58,265.78 L501.09,274.34 L501.60,278.03 L502.10,287.30 L502.61,293.82 L503.12,300.53 L503.63,307.81 L504.14,315.52 L504.64,323.54 L505.15,331.72 L505.66,339.93 L506.17,348.03 L506.68,355.87 L507.18,363.33 L507.69,370.27 L508.20,376.58 L508.71,379.08 L509.22,383.34 L509.72,382.11 L510.23,387.45 L510.74,387.58 L511.25,385.55 L511.76,390.23 L512.26,384.73 L512.77,385.05 L513.28,384.04 L513.79,379.08 L514.30,378.45 L514.80,372.75 L515.31,366.03 L515.82,358.75 L516.33,351.04 L516.84,343.02 L517.34,334.84 L517.85,326.63 L518.36,318.53 L518.87,310.69 L519.38,303.23 L519.88,296.29 L520.39,289.98 L520.90,282.25 L521.41,274.69 L521.92,267.91 L522.43,268.01 L522.93,260.95 L523.44,262.58 L523.95,264.04 L524.46,261.92 L524.97,269.79 L525.47,271.86 L525.98,278.30 L526.49,287.45 L527.00,293.82 L527.51,300.53 L528.01,307.81 L528.52,315.52 L529.03,323.54 L529.54,331.72 L530.05,339.93 L530.55,348.03 L531.06,355.87 L531.57,363.33 L532.08,370.27 L532.59,376.58 L533.09,380.27 L533.60,380.46 L534.11,384.87 L534.62,387.08 L535.13,384.71 L535.63,390.33 L536.14,386.20 L536.65,385.88 L537.16,386.91 L537.67,380.98 L538.17,381.08 L538.68,378.34 L539.19,372.75 L539.70,366.03 L540.21,358.75 L540.72,351.04 L541.22,343.02 L541.73,334.84 L542.24,326.63 L542.75,318.53 L543.26,310.69 L543.76,303.23 L544.27,296.29 L544.78,289.98 L545.29,281.90 L545.80,273.25 L546.30,271.49 L546.81,264.07 L547.32,262.76 L547.83,264.24 L548.34,259.80 L548.84,266.28 L549.35,267.63 L549.86,271.30 L550.37,280.01 L550.88,287.19 L551.38,293.82 L551.89,300.53 L552.40,307.81 L552.91,315.52 L553.42,323.54 L553.92,331.72 L554.43,339.93 L554.94,348.03 L555.45,355.87 L555.96,363.33 L556.46,370.27 L556.97,376.58 L557.48,378.73 L557.99,381.91 L558.50,385.66 L559.01,383.53 L559.51,389.37 L560.02,387.19 L560.53,386.02 L561.04,389.05 L561.55,382.91 L562.05,383.48 L562.56,380.78 L563.07,378.19 L563.58,372.75 L564.09,366.03 L564.59,358.75 L565.10,351.04 L565.61,343.02 L566.12,334.84 L566.63,326.63 L567.13,318.53 L567.64,310.69 L568.15,303.23 L568.66,296.29 L569.17,289.98 L569.67,280.72 L570.18,276.14 L570.69,268.70 L571.20,264.49 L571.71,265.59 L572.21,259.47 L572.72,263.86 L573.23,265.07 L573.74,265.81 L574.25,274.35 L574.75,278.00 L575.26,287.30 L575.77,293.82 L576.28,300.53 L576.79,307.81 L577.30,315.52 L577.80,323.54 L578.31,331.72 L578.82,339.93 L579.33,348.03 L579.84,355.87 L580.34,363.33 L580.85,370.27 L581.36,376.58 L581.87,379.10 L582.38,383.32 L582.88,382.09 L583.39,387.50 L583.90,387.51 L584.41,385.59 L584.92,390.23 L585.42,384.68 L585.93,385.11 L586.44,384.00 L586.95,379.08 L587.46,378.45 L587.96,372.75 L588.47,366.03 L588.98,358.75 L589.49,351.04 L590.00,343.02 L590.50,334.84 L591.01,326.63 L591.52,318.53 L592.03,310.69 L592.54,303.23 L593.04,296.29 L593.55,289.98 L594.06,282.27 L594.57,274.65 L595.08,267.95 L595.59,268.01 L596.09,260.91 L596.60,262.65 L597.11,263.98 L597.62,261.94 L598.13,269.81 L598.63,271.82 L599.14,278.33 L599.65,287.45 L600.16,293.82 L600.67,300.53 L601.17,307.81 L601.68,315.52 L602.19,323.54 L602.70,331.72 L603.21,339.93 L603.71,348.03 L604.22,355.87 L604.73,363.33 L605.24,370.27 L605.75,376.58 L606.25,380.27 L606.76,380.44 L607.27,384.92 L607.78,387.02 L608.29,384.73 L608.79,390.35 L609.30,386.14 L609.81,385.95 L610.32,386.88 L610.83,380.97 L611.34,381.10 L611.84,378.34 L612.35,372.75 L612.86,366.03 L613.37,358.75 L613.88,351.04 L614.38,343.02 L614.89,334.84 L615.40,326.63 L615.91,318.53 L616.42,310.69 L616.92,303.23 L617.43,296.29 L617.94,289.98 L618.45,281.88 L618.96,273.27 L619.46,271.50 L619.97,264.02 L620.48,262.82 L620.99,264.19 L621.50,259.80 L622.00,266.32 L622.51,267.57 L623.02,271.34 L623.53,280.01 L624.04,287.19 L624.54,293.82 L625.05,300.53 L625.56,307.81 L626.07,315.52 L626.58,323.54 L627.08,331.72 L627.59,339.93 L628.10,348.03 L628.61,355.87 L629.12,363.33 L629.62,370.27 L630.13,376.58 L630.64,378.72 L631.15,381.95 L631.66,385.62 L632.17,383.54 L632.67,389.41 L633.18,387.12 L633.69,386.08 L634.20,389.04 L634.71,382.89 L635.21,383.53 L635.72,380.75 L636.23,378.19 L636.74,372.75 L637.25,366.03 L637.75,358.75 L638.26,351.04 L638.77,343.02 L639.28,334.84 L639.79,326.63 L640.29,318.53 L640.80,310.69 L641.31,303.23 L641.82,296.29 L642.33,289.98 L642.83,280.73 L643.34,276.16 L643.85,268.65 L644.36,264.55 L644.87,265.56 L645.37,259.45 L645.88,263.92 L646.39,265.01 L646.90,265.85 L647.41,274.35 L647.91,277.98 L648.42,287.31 L648.93,293.82 L649.44,300.53 L649.95,307.81 L650.46,315.52 L650.96,323.54 L651.47,331.72 L651.98,339.93 L652.49,348.03 L653.00,355.87 L653.50,363.33 L654.01,370.27 L654.52,376.58 L655.03,379.13 L655.54,383.30 L656.04,382.08 L656.55,387.55 L657.06,387.45 L657.57,385.64 L658.08,390.23 L658.58,384.64 L659.09,385.17 L659.60,383.96 L660.11,379.09 L660.62,378.46 L661.12,372.75 L661.63,366.03 L662.14,358.75 L662.65,351.04 L663.16,343.02 L663.66,334.84 L664.17,326.63 L664.68,318.53 L665.19,310.69 L665.70,303.23 L666.20,296.29 L666.71,289.98 L667.22,282.28 L667.73,274.61 L668.24,267.99 L668.75,268.00 L669.25,260.87 L669.76,262.72 L670.27,263.92 L670.78,261.96 L671.29,269.84 L671.79,271.77 L672.30,278.36 L672.81,287.45 L673.32,293.82 L673.83,300.53 L674.33,307.81 L674.84,315.52 L675.35,323.54 L675.86,331.72 L676.37,339.93 L676.87,348.03 L677.38,355.87 L677.89,363.33 L678.40,370.27 L678.91,376.58 L679.41,380.26 L679.92,380.42 L680.43,384.97 L680.94,386.97 L681.45,384.76 L681.95,390.37 L682.46,386.08 L682.97,386.01 L683.48,386.85 L683.99,380.96 L684.49,381.12 L685.00,378.33 L685.51,372.75 L686.02,366.03 L686.53,358.75 L687.04,351.04 L687.54,343.02 L688.05,334.84 L688.56,326.63 L689.07,318.53 L689.58,310.69 L690.08,303.23 L690.59,296.29 L691.10,289.98 L691.61,281.86 L692.12,273.30 L692.62,271.51 L693.13,263.97 L693.64,262.89 L694.15,264.14 L694.66,259.80 L695.16,266.37 L695.67,267.51 L696.18,271.37 L696.69,280.00 L697.20,287.18 L697.70,293.82 L698.21,300.53 L698.72,307.81 L699.23,315.52 L699.74,323.54 L700.24,331.72 L700.75,339.93 L701.26,348.03 L701.77,355.87 L702.28,363.33 L702.78,370.27 L703.29,376.58 L703.80,378.70 L704.31,381.99 L704.82,385.58 L705.33,383.55 L705.83,389.45 L706.34,387.05 L706.85,386.14 L707.36,389.02 L707.87,382.86 L708.37,383.57 L708.88,380.72 L709.39,378.19 L709.90,372.75 L710.41,366.03 L710.91,358.75 L711.42,351.04 L711.93,343.02 L712.44,334.84 L712.95,326.63 L713.45,318.53 L713.96,310.69 L714.47,303.23 L714.98,296.29 L715.49,289.98 L715.99,280.73 L716.50,276.18 L717.01,268.60 L717.52,264.61 L718.03,265.53 L718.53,259.43 L719.04,263.98 L719.55,264.94 L720.06,265.88 L720.57,274.36 L721.07,277.96 L721.58,287.31 L722.09,293.82 L722.60,300.53 L723.11,307.81 L723.62,315.52 L724.12,323.54 L724.63,331.72 L725.14,339.93 L725.65,348.03 L726.16,355.87 L726.66,363.33 L727.17,370.27 L727.68,376.58 L728.19,379.15 L728.70,383.28 L729.20,382.08 L729.71,387.60 L730.22,387.38 L730.73,385.69 L731.24,390.23 L731.74,384.60 L732.25,385.23 L732.76,383.93 L733.27,379.09 L733.78,378.46 L734.28,372.75 L734.79,366.03 L735.30,358.75 L735.81,351.04 L736.32,343.02 L736.82,334.84 L737.33,326.63 L737.84,318.53 L738.35,310.69 L738.86,303.23 L739.37,296.29 L739.87,289.98 L740.38,282.30 L740.89,274.57 L741.40,268.03 L741.91,267.99 L742.41,260.83 L742.41,277.09 L741.91,283.01 L741.40,281.01 L740.89,284.55 L740.38,287.87 L739.87,289.98 L739.37,296.29 L738.86,303.23 L738.35,310.69 L737.84,318.53 L737.33,326.63 L736.82,334.84 L736.32,343.02 L735.81,351.04 L735.30,358.75 L734.79,366.03 L734.28,372.75 L733.78,379.38 L733.27,386.57 L732.76,395.17 L732.25,399.08 L731.74,400.18 L731.24,406.77 L730.73,402.44 L730.22,403.64 L729.71,402.62 L729.20,395.05 L728.70,393.26 L728.19,384.72 L727.68,376.58 L727.17,370.27 L726.66,363.33 L726.16,355.87 L725.65,348.03 L725.14,339.93 L724.63,331.72 L724.12,323.54 L723.62,315.52 L723.11,307.81 L722.60,300.53 L722.09,293.82 L721.58,288.23 L721.07,285.43 L720.57,285.60 L720.06,279.73 L719.55,280.52 L719.04,280.51 L718.53,276.18 L718.03,281.79 L717.52,279.63 L717.01,281.57 L716.50,286.16 L715.99,286.30 L715.49,289.98 L714.98,296.29 L714.47,303.23 L713.96,310.69 L713.45,318.53 L712.95,326.63 L712.44,334.84 L711.93,343.02 L711.42,351.04 L710.91,358.75 L710.41,366.03 L709.90,372.75 L709.39,379.11 L708.88,388.19 L708.37,394.81 L707.87,396.71 L707.36,404.60 L706.85,402.67 L706.34,403.81 L705.83,405.71 L705.33,398.57 L704.82,398.56 L704.31,391.97 L703.80,384.27 L703.29,376.58 L702.78,370.27 L702.28,363.33 L701.77,355.87 L701.26,348.03 L700.75,339.93 L700.24,331.72 L699.74,323.54 L699.23,315.52 L698.72,307.81 L698.21,300.53 L697.70,293.82 L697.20,288.11 L696.69,287.47 L696.18,282.62 L695.67,281.37 L695.16,281.95 L694.66,276.33 L694.15,280.90 L693.64,279.15 L693.13,278.99 L692.62,284.48 L692.12,283.27 L691.61,287.43 L691.10,289.98 L690.59,296.29 L690.08,303.23 L689.58,310.69 L689.07,318.53 L688.56,326.63 L688.05,334.84 L687.54,343.02 L687.04,351.04 L686.53,358.75 L686.02,366.03 L685.51,372.75 L685.00,379.25 L684.49,388.60 L683.99,392.21 L683.48,400.70 L682.97,401.59 L682.46,402.62 L681.95,407.13 L681.45,401.02 L680.94,401.99 L680.43,397.94 L679.92,390.39 L679.41,385.83 L678.91,376.58 L678.40,370.27 L677.89,363.33 L677.38,355.87 L676.87,348.03 L676.37,339.93 L675.86,331.72 L675.35,323.54 L674.84,315.52 L674.33,307.81 L673.83,300.53 L673.32,293.82 L672.81,288.37 L672.30,285.83 L671.79,283.02 L671.29,283.69 L670.78,277.54 L670.27,280.46 L669.76,279.48 L669.25,277.13 L668.75,283.02 L668.24,280.96 L667.73,284.59 L667.22,287.85 L666.71,289.98 L666.20,296.29 L665.70,303.23 L665.19,310.69 L664.68,318.53 L664.17,326.63 L663.66,334.84 L663.16,343.02 L662.65,351.04 L662.14,358.75 L661.63,366.03 L661.12,372.75 L660.62,379.38 L660.11,386.56 L659.60,395.21 L659.09,399.02 L658.58,400.22 L658.08,406.77 L657.57,402.40 L657.06,403.71 L656.55,402.57 L656.04,395.06 L655.54,393.28 L655.03,384.70 L654.52,376.58 L654.01,370.27 L653.50,363.33 L653.00,355.87 L652.49,348.03 L651.98,339.93 L651.47,331.72 L650.96,323.54 L650.46,315.52 L649.95,307.81 L649.44,300.53 L648.93,293.82 L648.42,288.23 L647.91,285.45 L647.41,285.60 L646.90,279.70 L646.39,280.59 L645.88,280.45 L645.37,276.20 L644.87,281.82 L644.36,279.57 L643.85,281.62 L643.34,286.14 L642.83,286.30 L642.33,289.98 L641.82,296.29 L641.31,303.23 L640.80,310.69 L640.29,318.53 L639.79,326.63 L639.28,334.84 L638.77,343.02 L638.26,351.04 L637.75,358.75 L637.25,366.03 L636.74,372.75 L636.23,379.11 L635.72,388.22 L635.21,394.77 L634.71,396.74 L634.20,404.62 L633.69,402.61 L633.18,403.88 L632.67,405.67 L632.17,398.56 L631.66,398.60 L631.15,391.93 L630.64,384.29 L630.13,376.58 L629.62,370.27 L629.12,363.33 L628.61,355.87 L628.10,348.03 L627.59,339.93 L627.08,331.72 L626.58,323.54 L626.07,315.52 L625.56,307.81 L625.05,300.53 L624.54,293.82 L624.04,288.11 L623.53,287.48 L623.02,282.58 L622.51,281.42 L622.00,281.90 L621.50,276.33 L620.99,280.95 L620.48,279.08 L619.97,279.04 L619.46,284.47 L618.96,283.25 L618.45,287.45 L617.94,289.98 L617.43,296.29 L616.92,303.23 L616.42,310.69 L615.91,318.53 L615.40,326.63 L614.89,334.84 L614.38,343.02 L613.88,351.04 L613.37,358.75 L612.86,366.03 L612.35,372.75 L611.84,379.26 L611.34,388.57 L610.83,392.21 L610.32,400.73 L609.81,401.53 L609.30,402.68 L608.79,407.11 L608.29,400.99 L607.78,402.04 L607.27,397.89 L606.76,390.41 L606.25,385.84 L605.75,376.58 L605.24,370.27 L604.73,363.33 L604.22,355.87 L603.71,348.03 L603.21,339.93 L602.70,331.72 L602.19,323.54 L601.68,315.52 L601.17,307.81 L600.67,300.53 L600.16,293.82 L599.65,288.37 L599.14,285.80 L598.63,283.06 L598.13,283.67 L597.62,277.52 L597.11,280.51 L596.60,279.41 L596.09,277.17 L595.59,283.03 L595.08,280.92 L594.57,284.63 L594.06,287.84 L593.55,289.98 L593.04,296.29 L592.54,303.23 L592.03,310.69 L591.52,318.53 L591.01,326.63 L590.50,334.84 L590.00,343.02 L589.49,351.04 L588.98,358.75 L588.47,366.03 L587.96,372.75 L587.46,379.38 L586.95,386.56 L586.44,395.24 L585.93,398.96 L585.42,400.26 L584.92,406.77 L584.41,402.35 L583.90,403.77 L583.39,402.52 L582.88,395.07 L582.38,393.30 L581.87,384.67 L581.36,376.58 L580.85,370.27 L580.34,363.33 L579.84,355.87 L579.33,348.03 L578.82,339.93 L578.31,331.72 L577.80,323.54 L577.30,315.52 L576.79,307.81 L576.28,300.53 L575.77,293.82 L575.26,288.23 L574.75,285.48 L574.25,285.59 L573.74,279.67 L573.23,280.65 L572.72,280.39 L572.21,276.23 L571.71,281.85 L571.20,279.51 L570.69,281.67 L570.18,286.12 L569.67,286.29 L569.17,289.98 L568.66,296.29 L568.15,303.23 L567.64,310.69 L567.13,318.53 L566.63,326.63 L566.12,334.84 L565.61,343.02 L565.10,351.04 L564.59,358.75 L564.09,366.03 L563.58,372.75 L563.07,379.11 L562.56,388.25 L562.05,394.73 L561.55,396.76 L561.04,404.63 L560.53,402.55 L560.02,403.95 L559.51,405.63 L559.01,398.55 L558.50,398.64 L557.99,391.89 L557.48,384.31 L556.97,376.58 L556.46,370.27 L555.96,363.33 L555.45,355.87 L554.94,348.03 L554.43,339.93 L553.92,331.72 L553.42,323.54 L552.91,315.52 L552.40,307.81 L551.89,300.53 L551.38,293.82 L550.88,288.11 L550.37,287.48 L549.86,282.55 L549.35,281.48 L548.84,281.86 L548.34,276.33 L547.83,280.99 L547.32,279.02 L546.81,279.09 L546.30,284.46 L545.80,283.23 L545.29,287.47 L544.78,289.98 L544.27,296.29 L543.76,303.23 L543.26,310.69 L542.75,318.53 L542.24,326.63 L541.73,334.84 L541.22,343.02 L540.72,351.04 L540.21,358.75 L539.70,366.03 L539.19,372.75 L538.68,379.26 L538.17,388.55 L537.67,392.22 L537.16,400.77 L536.65,401.46 L536.14,402.74 L535.63,407.08 L535.13,400.97 L534.62,402.10 L534.11,397.84 L533.60,390.43 L533.09,385.84 L532.59,376.58 L532.08,370.27 L531.57,363.33 L531.06,355.87 L530.55,348.03 L530.05,339.93 L529.54,331.72 L529.03,323.54 L528.52,315.52 L528.01,307.81 L527.51,300.53 L527.00,293.82 L526.49,288.38 L525.98,285.77 L525.47,283.10 L524.97,283.64 L524.46,277.50 L523.95,280.57 L523.44,279.34 L522.93,277.21 L522.43,283.03 L521.92,280.88 L521.41,284.67 L520.90,287.82 L520.39,289.98 L519.88,296.29 L519.38,303.23 L518.87,310.69 L518.36,318.53 L517.85,326.63 L517.34,334.84 L516.84,343.02 L516.33,351.04 L515.82,358.75 L515.31,366.03 L514.80,372.75 L514.30,379.37 L513.79,386.55 L513.28,395.28 L512.77,398.91 L512.26,400.31 L511.76,406.76 L511.25,402.31 L510.74,403.84 L510.23,402.47 L509.72,395.08 L509.22,393.32 L508.71,384.65 L508.20,376.58 L507.69,370.27 L507.18,363.33 L506.68,355.87 L506.17,348.03 L505.66,339.93 L505.15,331.72 L504.64,323.54 L504.14,315.52 L503.63,307.81 L503.12,300.53 L502.61,293.82 L502.10,288.22 L501.60,285.50 L501.09,285.58 L500.58,279.63 L500.07,280.71 L499.56,280.33 L499.05,276.25 L498.55,281.87 L498.04,279.45 L497.53,281.72 L497.02,286.10 L496.51,286.29 L496.01,289.98 L495.50,296.29 L494.99,303.23 L494.48,310.69 L493.97,318.53 L493.47,326.63 L492.96,334.84 L492.45,343.02 L491.94,351.04 L491.43,358.75 L490.93,366.03 L490.42,372.75 L489.91,379.11 L489.40,388.28 L488.89,394.68 L488.39,396.79 L487.88,404.65 L487.37,402.50 L486.86,404.01 L486.35,405.59 L485.85,398.55 L485.34,398.68 L484.83,391.85 L484.32,384.32 L483.81,376.58 L483.31,370.27 L482.80,363.33 L482.29,355.87 L481.78,348.03 L481.27,339.93 L480.76,331.72 L480.26,323.54 L479.75,315.52 L479.24,307.81 L478.73,300.53 L478.22,293.82 L477.72,288.11 L477.21,287.49 L476.70,282.51 L476.19,281.54 L475.68,281.81 L475.18,276.34 L474.67,281.04 L474.16,278.95 L473.65,279.14 L473.14,284.45 L472.64,283.21 L472.13,287.49 L471.62,289.98 L471.11,296.29 L470.60,303.23 L470.10,310.69 L469.59,318.53 L469.08,326.63 L468.57,334.84 L468.06,343.02 L467.56,351.04 L467.05,358.75 L466.54,366.03 L466.03,372.75 L465.52,379.27 L465.01,388.52 L464.51,392.23 L464.00,400.80 L463.49,401.40 L462.98,402.80 L462.47,407.06 L461.97,400.94 L461.46,402.16 L460.95,397.79 L460.44,390.46 L459.93,385.85 L459.43,376.58 L458.92,370.27 L458.41,363.33 L457.90,355.87 L457.39,348.03 L456.89,339.93 L456.38,331.72 L455.87,323.54 L455.36,315.52 L454.85,307.81 L454.35,300.53 L453.84,293.82 L453.33,288.38 L452.82,285.74 L452.31,283.15 L451.81,283.61 L451.30,277.49 L450.79,280.63 L450.28,279.27 L449.77,277.25 L449.27,283.04 L448.76,280.84 L448.25,284.71 L447.74,287.80 L447.23,289.98 L446.72,296.29 L446.22,303.23 L445.71,310.69 L445.20,318.53 L444.69,326.63 L444.18,334.84 L443.68,343.02 L443.17,351.04 L442.66,358.75 L442.15,366.03 L441.64,372.75 L441.14,379.37 L440.63,386.55 L440.12,395.32 L439.61,398.85 L439.10,400.35 L438.60,406.76 L438.09,402.26 L437.58,403.91 L437.07,402.41 L436.56,395.09 L436.06,393.34 L435.55,384.63 L435.04,376.58 L434.53,370.27 L434.02,363.33 L433.52,355.87 L433.01,348.03 L432.50,339.93 L431.99,331.72 L431.48,323.54 L430.98,315.52 L430.47,307.81 L429.96,300.53 L429.45,293.82 L428.94,288.22 L428.44,285.53 L427.93,285.57 L427.42,279.61 L426.91,280.77 L426.40,280.27 L425.89,276.28 L425.39,281.90 L424.88,279.40 L424.37,281.78 L423.86,286.08 L423.35,286.28 L422.85,289.98 L422.34,296.29 L421.83,303.23 L421.32,310.69 L420.81,318.53 L420.31,326.63 L419.80,334.84 L419.29,343.02 L418.78,351.04 L418.27,358.75 L417.77,366.03 L417.26,372.75 L416.75,379.11 L416.24,388.31 L415.73,394.64 L415.23,396.82 L414.72,404.67 L414.21,402.44 L413.70,404.08 L413.19,405.55 L412.69,398.54 L412.18,398.71 L411.67,391.81 L411.16,384.34 L410.65,376.58 L410.14,370.27 L409.64,363.33 L409.13,355.87 L408.62,348.03 L408.11,339.93 L407.60,331.72 L407.10,323.54 L406.59,315.52 L406.08,307.81 L405.57,300.53 L405.06,293.82 L404.56,288.11 L404.05,287.49 L403.54,282.48 L403.03,281.60 Z" fill="#2fa7e0" stroke="#2fa7e0" stroke-width="0.4" stroke-linejoin="round"/><rect x="401.0" y="183.7" width="365.79999999999995" height="365.90000000000003" fill="none" stroke="#4d6979" stroke-width="1.4"/><line x1="401.00" y1="549.6" x2="401.00" y2="542.6" stroke="#4d6979" stroke-width="1.2"/><line x1="461.97" y1="549.6" x2="461.97" y2="542.6" stroke="#4d6979" stroke-width="1.2"/><line x1="522.93" y1="549.6" x2="522.93" y2="542.6" stroke="#4d6979" stroke-width="1.2"/><line x1="583.90" y1="549.6" x2="583.90" y2="542.6" stroke="#4d6979" stroke-width="1.2"/><line x1="644.87" y1="549.6" x2="644.87" y2="542.6" stroke="#4d6979" stroke-width="1.2"/><line x1="705.83" y1="549.6" x2="705.83" y2="542.6" stroke="#4d6979" stroke-width="1.2"/><line x1="766.80" y1="549.6" x2="766.80" y2="542.6" stroke="#4d6979" stroke-width="1.2"/><line x1="401.0" y1="549.60" x2="408.0" y2="549.60" stroke="#4d6979" stroke-width="1.2"/><line x1="401.0" y1="427.63" x2="408.0" y2="427.63" stroke="#4d6979" stroke-width="1.2"/><line x1="401.0" y1="305.67" x2="408.0" y2="305.67" stroke="#4d6979" stroke-width="1.2"/><line x1="401.0" y1="183.70" x2="408.0" y2="183.70" stroke="#4d6979" stroke-width="1.2"/><line x1="401.0" y1="488.62" x2="405.0" y2="488.62" stroke="#4d6979" stroke-width="1.1"/><line x1="401.0" y1="366.65" x2="405.0" y2="366.65" stroke="#4d6979" stroke-width="1.1"/><line x1="401.0" y1="244.68" x2="405.0" y2="244.68" stroke="#4d6979" stroke-width="1.1"/><line x1="401.00" y1="183.7" x2="401.00" y2="190.7" stroke="#4d6979" stroke-width="1.2"/><line x1="474.16" y1="183.7" x2="474.16" y2="190.7" stroke="#4d6979" stroke-width="1.2"/><line x1="547.32" y1="183.7" x2="547.32" y2="190.7" stroke="#4d6979" stroke-width="1.2"/><line x1="620.48" y1="183.7" x2="620.48" y2="190.7" stroke="#4d6979" stroke-width="1.2"/><line x1="693.64" y1="183.7" x2="693.64" y2="190.7" stroke="#4d6979" stroke-width="1.2"/><line x1="766.80" y1="183.7" x2="766.80" y2="190.7" stroke="#4d6979" stroke-width="1.2"/><line x1="437.58" y1="183.7" x2="437.58" y2="187.29999999999998" stroke="#4d6979" stroke-width="1.1"/><line x1="510.74" y1="183.7" x2="510.74" y2="187.29999999999998" stroke="#4d6979" stroke-width="1.1"/><line x1="583.90" y1="183.7" x2="583.90" y2="187.29999999999998" stroke="#4d6979" stroke-width="1.1"/><line x1="657.06" y1="183.7" x2="657.06" y2="187.29999999999998" stroke="#4d6979" stroke-width="1.1"/><line x1="730.22" y1="183.7" x2="730.22" y2="187.29999999999998" stroke="#4d6979" stroke-width="1.1"/><line x1="766.8" y1="549.60" x2="759.5" y2="549.60" stroke="#4d6979" stroke-width="1.2"/><line x1="766.8" y1="476.42" x2="759.5" y2="476.42" stroke="#4d6979" stroke-width="1.2"/><line x1="766.8" y1="403.24" x2="759.5" y2="403.24" stroke="#4d6979" stroke-width="1.2"/><line x1="766.8" y1="330.06" x2="759.5" y2="330.06" stroke="#4d6979" stroke-width="1.2"/><line x1="766.8" y1="256.88" x2="759.5" y2="256.88" stroke="#4d6979" stroke-width="1.2"/><line x1="766.8" y1="183.70" x2="759.5" y2="183.70" stroke="#4d6979" stroke-width="1.2"/><text x="401.00" y="566.1" font-size="11.3" fill="#4d6979" text-anchor="middle">0</text><text x="461.97" y="566.1" font-size="11.3" fill="#4d6979" text-anchor="middle">30</text><text x="522.93" y="566.1" font-size="11.3" fill="#4d6979" text-anchor="middle">60</text><text x="583.90" y="566.1" font-size="11.3" fill="#4d6979" text-anchor="middle">90</text><text x="644.87" y="566.1" font-size="11.3" fill="#4d6979" text-anchor="middle">120</text><text x="705.83" y="566.1" font-size="11.3" fill="#4d6979" text-anchor="middle">150</text><text x="766.80" y="566.1" font-size="11.3" fill="#4d6979" text-anchor="middle">180</text><text x="395.4" y="554.90" font-size="11.3" fill="#4d6979" text-anchor="end">0</text><text x="395.4" y="432.93" font-size="11.3" fill="#4d6979" text-anchor="end">6</text><text x="395.4" y="310.97" font-size="11.3" fill="#4d6979" text-anchor="end">12</text><text x="395.4" y="189.00" font-size="11.3" fill="#4d6979" text-anchor="end">18</text><text x="584" y="171.6" font-size="19.7" fill="#47687d" text-anchor="middle">El Niño-Southern Oscillation</text><text x="584" y="590.3" font-size="14.9" fill="#4d6979" text-anchor="middle" font-family="Liberation Mono, monospace">Month</text><text transform="translate(371.3,364) rotate(-90)" font-size="15.2" fill="#4d6979" text-anchor="middle" font-family="Liberation Mono, monospace">Atmospheric Pressure</text><rect x="681.3" y="483.6" width="72" height="38.6" fill="#fdf6e3" stroke="#4d6979" stroke-width="1"/><circle cx="704.6" cy="495.6" r="3.1" fill="#dc1f1f"/><line x1="687.3" y1="509.7" x2="721.4" y2="509.7" stroke="#8f9d16" stroke-width="1.5"/><text x="724.6" y="501" font-size="11.5" fill="#4d6979">data</text><text x="724.6" y="515.3" font-size="11.5" fill="#4d6979">fit</text></svg>
<div class="a" style="left:848.2px;top:87px;width:1.00px;height:16.00px;background:#3d4247"></div>
<div class="t " style="left:851px;top:90px;">Fit</div>
<svg class="a" style="left:1119.05px;top:89.05px" width="8.5" height="8.5" viewBox="0 0 16 16" fill="none" stroke="#fcfcfc" stroke-width="1.5" ><path d="M8 3 L13 8 L8 13 L3 8 Z" stroke-width="1.8"/></svg>
<div class="a" style="left:1131.5px;top:88.8px;width:9.00px;height:9.00px;background:#b4b6b8;border-radius:50%"></div>
<svg class="a" style="left:1133.00px;top:90.30px" width="6" height="6" viewBox="0 0 16 16" fill="none" stroke="#31363b" stroke-width="1.5" ><path d="M3.5 3.5 L12.5 12.5 M12.5 3.5 L3.5 12.5" stroke-width="2.2"/></svg>
<svg class="a" style="left:846px;top:100px" width="301" height="551"><rect x="2.80" y="2.10" width="294.40" height="544.90" rx="3.0" fill="#1b1e20" stroke="#3590ca" stroke-width="1.3"/></svg>
<div class="a" style="left:897px;top:108px;width:174.00px;height:14.50px;background:#202326"></div>
<div class="a" style="left:940.3px;top:108px;width:1.00px;height:14.50px;background:#1d2022"></div>
<div class="a" style="left:983.7px;top:108px;width:1.00px;height:14.50px;background:#1d2022"></div>
<div class="a" style="left:1027.1px;top:108px;width:1.00px;height:14.50px;background:#1d2022"></div>
<div class="a" style="left:1070.5px;top:108px;width:1.00px;height:14.50px;background:#1d2022"></div>
<svg class="a" style="left:851px;top:120px" width="291" height="493"><rect x="2.00" y="2.00" width="285.80" height="487.50" rx="2.0" fill="#282b2f" stroke="#43484d" stroke-width="1.0"/></svg>
<div class="a" style="left:853px;top:107px;width:44.00px;height:16.20px;background:#282b2f;border:1px solid #43484d;border-bottom:none;border-top:2px solid #3daee9;border-radius:2px 2px 0 0"></div>
<div class="t " style="left:875.2px;top:111px;transform:translateX(-50%) scaleY(1.1);">General</div>
<div class="t " style="left:918.4px;top:111px;transform:translateX(-50%) scaleY(1.1);">Line</div>
<div class="t " style="left:962px;top:111px;transform:translateX(-50%) scaleY(1.1);">Symbol</div>
<div class="t " style="left:1005.2px;top:111px;transform:translateX(-50%) scaleY(1.1);">Values</div>
<div class="t " style="left:1048.5px;top:111px;transform:translateX(-50%) scaleY(1.1);">Filling</div>
<div class="t " style="left:856.3px;top:130px;">Name:</div>
<svg class="a" style="left:923px;top:124px" width="216" height="21"><rect x="2.50" y="2.70" width="210.10" height="15.10" rx="2.0" fill="#1b1e20" stroke="#54595e" stroke-width="1.0"/></svg>
<div class="t " style="left:929.6px;top:130px;">fit</div>
<div class="t " style="left:856.3px;top:150px;">Comment:</div>
<svg class="a" style="left:923px;top:142px" width="216" height="24"><rect x="2.50" y="2.80" width="210.10" height="17.80" rx="2.0" fill="#1b1e20" stroke="#54595e" stroke-width="1.0"/></svg>
<svg class="a" style="left:871.00px;top:173.60px" width="12" height="12" viewBox="0 0 16 16" fill="none" stroke="#fcfcfc" stroke-width="1.5" ><path d="M6 3 L11 8 L6 13" stroke-width="1.4"/></svg>
<div class="t b" style="left:883.6px;top:176px;">Data:</div>
<svg class="a" style="left:865.40px;top:198.20px" width="12" height="12" viewBox="0 0 16 16" fill="none" stroke="#fcfcfc" stroke-width="1.5" ><path d="M6 3 L11 8 L6 13" stroke-width="1.4"/></svg>
<div class="t b" style="left:878px;top:200px;">Weights:</div>
<svg class="a" style="left:854px;top:219px" width="66" height="22"><rect x="2.60" y="2.00" width="60.20" height="16.80" rx="2.0" fill="#42474c" stroke="#5a5f64" stroke-width="1.0"/></svg>
<svg class="a" style="left:874.80px;top:224.30px" width="11" height="11" viewBox="0 0 16 16" fill="none" stroke="#fcfcfc" stroke-width="1.5" ><path d="M3 6 L8 11 L13 6" stroke-width="1.4"/></svg>
<div class="t b" style="left:887.5px;top:225px;">Fit:</div>
<svg class="a" style="left:1082px;top:219px" width="57" height="22"><rect x="2.30" y="2.00" width="51.30" height="16.80" rx="2.0" fill="#2f3338" stroke="#565b60" stroke-width="1.0"/></svg>
<svg class="a" style="left:1088.70px;top:225.50px" width="8" height="8" viewBox="0 0 16 16" fill="none" stroke="#fcfcfc" stroke-width="1.5" ><path d="M2 5 H14 M2 11 H14" stroke-width="1.6"/><rect x="9" y="3" width="3" height="4" fill="#fcfcfc" stroke="none"/><rect x="4" y="9" width="3" height="4" fill="#fcfcfc" stroke="none"/></svg>
<div class="t " style="left:1099.2px;top:225px;">Advanced</div>
<div class="t " style="left:856.3px;top:245px;">Category:</div>
<svg class="a" style="left:923px;top:238px" width="216" height="22"><rect x="2.50" y="2.60" width="210.10" height="16.10" rx="2.0" fill="#2f3338" stroke="#565b60" stroke-width="1.0"/></svg>
<div class="t " style="left:929.2px;top:245px;">Custom</div>
<svg class="a" style="left:1124.30px;top:244.20px" width="10" height="10" viewBox="0 0 16 16" fill="none" stroke="#fcfcfc" stroke-width="1.5" ><path d="M3 6 L8 11 L13 6" stroke-width="1.4"/></svg>
<div class="t " style="left:856.3px;top:259px;">f(x) =</div>
<svg class="a" style="left:923px;top:257px" width="198" height="39"><rect x="2.50" y="2.30" width="192.30" height="32.70" rx="2.0" fill="#1b1e20" stroke="#54595e" stroke-width="1.0"/></svg>
<div class="a" style="left:1106.2px;top:260.3px;width:0.80px;height:30.70px;background:#2c3034"></div>
<div class="a" style="left:1109.4px;top:262px;width:5.60px;height:26.00px;background:#6b7074;border-radius:2.8px"></div>
<div class="t " style="left:928.6px;top:263px;font-size:7.55px"><span style="color:#8be085">b1</span> + <span style="color:#8be085">b2</span>*<span style="color:#ff9b94">cos</span>( 2*<span style="color:#ff9b94">pi</span>*<span style="color:#8be085">x</span>/12 ) + <span style="color:#8be085">b3</span>*<span style="color:#ff9b94">sin</span>( 2*<span style="color:#ff9b94">pi</span>*<span style="color:#8be085">x</span>/12 ) +</div>
<div class="t " style="left:928.6px;top:273px;font-size:7.55px"><span style="color:#8be085">b5</span>*<span style="color:#ff9b94">cos</span>( 2*<span style="color:#ff9b94">pi</span>*<span style="color:#8be085">x</span>/<span style="color:#8be085">b4</span> ) + <span style="color:#8be085">b6</span>*<span style="color:#ff9b94">sin</span>( 2*<span style="color:#ff9b94">pi</span>*<span style="color:#8be085">x</span>/<span style="color:#8be085">b4</span> ) + <span style="color:#8be085">b8</span>*<span style="color:#ff9b94">cos</span>(</div>
<div class="t " style="left:928.6px;top:282px;font-size:7.55px">2*<span style="color:#ff9b94">pi</span>*<span style="color:#8be085">x</span>/<span style="color:#8be085">b7</span> ) + <span style="color:#8be085">b9</span>*<span style="color:#ff9b94">sin</span>( 2*<span style="color:#ff9b94">pi</span>*<span style="color:#8be085">x</span>/<span style="color:#8be085">b7</span> )</div>
<svg class="a" style="left:1117px;top:257px" width="22" height="21"><rect x="2.40" y="2.30" width="16.20" height="15.10" rx="2.0" fill="#2f3338" stroke="#565b60" stroke-width="1.0"/></svg>
<div class="t " style="left:1127.5px;top:263px;transform:translateX(-50%) scaleY(1.1);font-size:4.5px;color:#c9cbcd">Aa</div>
<svg class="a" style="left:1117px;top:274px" width="22" height="22"><rect x="2.40" y="2.60" width="16.20" height="15.40" rx="2.0" fill="#2f3338" stroke="#565b60" stroke-width="1.0"/></svg>
<svg class="a" style="left:1123.50px;top:280.50px" width="8" height="8" viewBox="0 0 16 16" fill="none" stroke="#fcfcfc" stroke-width="1.5" ><path d="M2.5 4 H13.5 M5.5 4 V13 M10.5 4 V12 Q10.5 13 12 13" stroke-width="1.8"/></svg>
<svg class="a" style="left:854px;top:300px" width="66" height="20"><rect x="2.60" y="2.00" width="60.20" height="14.80" rx="2.0" fill="#2f3338" stroke="#565b60" stroke-width="1.0"/></svg>
<svg class="a" style="left:859.70px;top:304.20px" width="11" height="11" viewBox="0 0 16 16" fill="none" stroke="#fcfcfc" stroke-width="1.5" ><path d="M3 6 L8 11 L13 6" stroke-width="1.4"/></svg>
<div class="t b" style="left:872px;top:305px;">Parameters:</div>
<svg class="a" style="left:923px;top:299px" width="216" height="103"><rect x="2.50" y="2.70" width="210.10" height="96.50" rx="2.0" fill="#1b1e20" stroke="#2c7db0" stroke-width="1.1"/></svg>
<div class="a" style="left:926.5px;top:302.7px;width:197.30px;height:15.60px;background:#31363b"></div>
<div class="a" style="left:937.8px;top:302.7px;width:26.00px;height:15.60px;background:#2b4a5e"></div>
<div class="a" style="left:937.3px;top:302.7px;width:1.00px;height:15.60px;background:#464b50"></div>
<div class="a" style="left:963.3px;top:302.7px;width:1.00px;height:15.60px;background:#464b50"></div>
<div class="a" style="left:1006.1px;top:302.7px;width:1.00px;height:15.60px;background:#464b50"></div>
<div class="a" style="left:1032.0px;top:302.7px;width:1.00px;height:15.60px;background:#464b50"></div>
<div class="a" style="left:1075.9px;top:302.7px;width:1.00px;height:15.60px;background:#464b50"></div>
<div class="a" style="left:1123.3px;top:302.7px;width:1.00px;height:15.60px;background:#464b50"></div>
<div class="a" style="left:926.5px;top:317.8px;width:197.30px;height:1.00px;background:#464b50"></div>
<div class="t b" style="left:950.8px;top:306px;transform:translateX(-50%) scaleY(1.1);">Name</div>
<div class="t " style="left:985.2px;top:306px;transform:translateX(-50%) scaleY(1.1);">Start value</div>
<div class="t " style="left:1019.5px;top:306px;transform:translateX(-50%) scaleY(1.1);">Fixed</div>
<div class="t " style="left:1054.4px;top:306px;transform:translateX(-50%) scaleY(1.1);">Lower limit</div>
<div class="t " style="left:1100px;top:306px;transform:translateX(-50%) scaleY(1.1);">Upper limit</div>
<div class="a" style="left:926.5px;top:318.3px;width:11.30px;height:16.30px;background:#2b4a5e"></div>
<div class="a" style="left:926.5px;top:334.1px;width:11.30px;height:1.00px;background:#464b50"></div>
<div class="a" style="left:937.8px;top:318.3px;width:26.00px;height:16.30px;background:#1f4a63"></div>
<div class="a" style="left:963.8px;top:334.1px;width:160.00px;height:1.00px;background:#222528"></div>
<div class="t b" style="left:932.2px;top:323px;transform:translateX(-50%) scaleY(1.1);">1</div>
<div class="t " style="left:939.2px;top:322px;">b1</div>
<div class="t " style="left:965.3px;top:323px;">10.6415</div>
<svg class="a" style="left:1011px;top:320px" width="14" height="14"><rect x="2.50" y="2.05" width="8.00" height="8.00" rx="1.5" fill="#1f2225" stroke="#5f6368" stroke-width="1.0"/></svg>
<div class="a" style="left:926.5px;top:334.6px;width:11.30px;height:16.30px;background:#31363b"></div>
<div class="a" style="left:926.5px;top:350.40000000000003px;width:11.30px;height:1.00px;background:#464b50"></div>
<div class="a" style="left:937.8px;top:334.6px;width:26.00px;height:16.30px;background:#232629"></div>
<div class="a" style="left:963.8px;top:350.40000000000003px;width:160.00px;height:1.00px;background:#222528"></div>
<div class="t " style="left:932.2px;top:339px;transform:translateX(-50%) scaleY(1.1);">2</div>
<div class="t " style="left:939.2px;top:338px;">b2</div>
<div class="t " style="left:965.3px;top:339px;">3.05277</div>
<svg class="a" style="left:1011px;top:336px" width="14" height="14"><rect x="2.50" y="2.35" width="8.00" height="8.00" rx="1.5" fill="#1f2225" stroke="#5f6368" stroke-width="1.0"/></svg>
<div class="a" style="left:926.5px;top:350.90000000000003px;width:11.30px;height:16.30px;background:#31363b"></div>
<div class="a" style="left:926.5px;top:366.70000000000005px;width:11.30px;height:1.00px;background:#464b50"></div>
<div class="a" style="left:937.8px;top:350.90000000000003px;width:26.00px;height:16.30px;background:#232629"></div>
<div class="a" style="left:963.8px;top:366.70000000000005px;width:160.00px;height:1.00px;background:#222528"></div>
<div class="t " style="left:932.2px;top:355px;transform:translateX(-50%) scaleY(1.1);">3</div>
<div class="t " style="left:939.2px;top:355px;">b3</div>
<div class="t " style="left:965.3px;top:355px;">0.479257</div>
<svg class="a" style="left:1011px;top:352px" width="14" height="14"><rect x="2.50" y="2.65" width="8.00" height="8.00" rx="1.5" fill="#1f2225" stroke="#5f6368" stroke-width="1.0"/></svg>
<div class="a" style="left:926.5px;top:367.20000000000005px;width:11.30px;height:16.30px;background:#31363b"></div>
<div class="a" style="left:926.5px;top:383.00000000000006px;width:11.30px;height:1.00px;background:#464b50"></div>
<div class="a" style="left:937.8px;top:367.20000000000005px;width:26.00px;height:16.30px;background:#232629"></div>
<div class="a" style="left:963.8px;top:383.00000000000006px;width:160.00px;height:1.00px;background:#222528"></div>
<div class="t " style="left:932.2px;top:372px;transform:translateX(-50%) scaleY(1.1);">4</div>
<div class="t " style="left:939.2px;top:371px;">b5</div>
<div class="t " style="left:965.3px;top:372px;">-0.0808158</div>
<svg class="a" style="left:1011px;top:368px" width="14" height="14"><rect x="2.50" y="2.95" width="8.00" height="8.00" rx="1.5" fill="#1f2225" stroke="#5f6368" stroke-width="1.0"/></svg>
<div class="a" style="left:926.5px;top:383.5px;width:11.30px;height:13.70px;background:#31363b"></div>
<div class="a" style="left:926.5px;top:396.7px;width:11.30px;height:1.00px;background:#464b50"></div>
<div class="a" style="left:937.8px;top:383.5px;width:26.00px;height:13.70px;background:#232629"></div>
<div class="t " style="left:932.2px;top:388px;transform:translateX(-50%) scaleY(1.1);">5</div>
<div class="t " style="left:939.2px;top:387px;">b4</div>
<div class="t " style="left:965.3px;top:388px;">-0.699536</div>
<svg class="a" style="left:1011px;top:385px" width="14" height="14"><rect x="2.50" y="2.25" width="8.00" height="8.00" rx="1.5" fill="#1f2225" stroke="#5f6368" stroke-width="1.0"/></svg>
<div class="a" style="left:963.3px;top:318.3px;width:1.00px;height:78.90px;background:#25282b"></div>
<div class="a" style="left:1006.1px;top:318.3px;width:1.00px;height:78.90px;background:#25282b"></div>
<div class="a" style="left:1032.0px;top:318.3px;width:1.00px;height:78.90px;background:#25282b"></div>
<div class="a" style="left:1075.9px;top:318.3px;width:1.00px;height:78.90px;background:#25282b"></div>
<div class="a" style="left:1123.3px;top:318.3px;width:1.00px;height:78.90px;background:#25282b"></div>
<div class="a" style="left:937.3px;top:318.3px;width:1.00px;height:78.90px;background:#464b50"></div>
<div class="a" style="left:1126.8px;top:305.7px;width:5.50px;height:39.00px;background:#6b7074;border-radius:2.8px"></div>
<svg class="a" style="left:1089px;top:398px" width="50" height="23"><rect x="2.30" y="2.60" width="44.30" height="17.00" rx="2.0" fill="#2f3338" stroke="#565b60" stroke-width="1.0"/></svg>
<svg class="a" style="left:1103.95px;top:405.45px" width="7.5" height="7.5" viewBox="0 0 16 16" fill="none" stroke="#fcfcfc" stroke-width="1.5" ><circle cx="8" cy="8" r="5.5" stroke-width="1.8"/><circle cx="8" cy="8" r="1.6" fill="#fcfcfc" stroke="none"/></svg>
<div class="t " style="left:1114.7px;top:405px;">Fit</div>
<svg class="a" style="left:854px;top:420px" width="66" height="21"><rect x="2.60" y="2.60" width="60.20" height="15.10" rx="2.0" fill="#3b4045" stroke="#565b60" stroke-width="1.0"/></svg>
<svg class="a" style="left:866.70px;top:425.10px" width="11" height="11" viewBox="0 0 16 16" fill="none" stroke="#fcfcfc" stroke-width="1.5" ><path d="M3 6 L8 11 L13 6" stroke-width="1.4"/></svg>
<div class="t b" style="left:879.5px;top:426px;">Results:</div>
<div class="a" style="left:926px;top:423.5px;width:149.50px;height:15.00px;background:#232629"></div>
<svg class="a" style="left:923px;top:436px" width="216" height="132"><rect x="2.50" y="2.20" width="210.10" height="126.70" rx="2.0" fill="#282b2f" stroke="#43484d" stroke-width="1.0"/></svg>
<div class="a" style="left:972.6px;top:422.6px;width:59.60px;height:16.60px;background:#282b2f;border:1px solid #43484d;border-bottom:none;border-top:2px solid #3daee9;border-radius:2px 2px 0 0"></div>
<div class="t " style="left:949px;top:427px;transform:translateX(-50%) scaleY(1.1);">Parameters</div>
<div class="t " style="left:1002.4px;top:427px;transform:translateX(-50%) scaleY(1.1);">Goodness of fit</div>
<div class="t " style="left:1053.5px;top:427px;transform:translateX(-50%) scaleY(1.1);">Log</div>
<svg class="a" style="left:929px;top:442px" width="205" height="121"><rect x="2.30" y="2.00" width="198.90" height="115.80" rx="0" fill="#1b1e20" stroke="#41464b" stroke-width="1.0"/></svg>
<div class="t " style="left:933.4px;top:448px;font-size:7.15px">Sum of squared residuals (χ²)</div>
<div class="t " style="left:1072.4px;top:448px;">1118.18</div>
<div class="a" style="left:932.3px;top:460.3px;width:185.70px;height:16.30px;background:#232629"></div>
<div class="t " style="left:933.4px;top:464px;font-size:7.15px">Residual mean square (χ²/dof)</div>
<div class="t " style="left:1072.4px;top:464px;">7.03255</div>
<div class="t " style="left:933.4px;top:481px;font-size:7.15px">Root mean square deviation (RMSD, SD)</div>
<div class="t " style="left:1072.4px;top:481px;">2.6519</div>
<div class="a" style="left:932.3px;top:492.9px;width:185.70px;height:16.30px;background:#232629"></div>
<div class="t " style="left:933.4px;top:497px;font-size:7.15px">Coefficient of determination (R²)</div>
<div class="t " style="left:1072.4px;top:497px;">0.430382</div>
<div class="t " style="left:933.4px;top:513px;font-size:7.15px">Adj. coefficient of determination (R̄²)</div>
<div class="t " style="left:1072.4px;top:513px;">0.397936</div>
<div class="a" style="left:932.3px;top:525.5px;width:185.70px;height:16.30px;background:#232629"></div>
<div class="t " style="left:933.4px;top:530px;font-size:7.15px">χ²-test ( P > χ²)</div>
<div class="t " style="left:1072.4px;top:530px;">0</div>
<div class="t " style="left:933.4px;top:546px;font-size:7.15px">F test</div>
<div class="t " style="left:1072.4px;top:546px;">15</div>
<div class="a" style="left:1069.8px;top:445px;width:0.80px;height:113.80px;background:#25282b"></div>
<div class="a" style="left:1118px;top:445px;width:0.80px;height:113.80px;background:#25282b"></div>
<div class="a" style="left:1121.5px;top:447.6px;width:5.30px;height:68.80px;background:#6b7074;border-radius:2.7px"></div>
<div class="a" style="left:856.5px;top:567.2px;width:279.50px;height:0.80px;background:#43484d"></div>
<div class="t " style="left:856.3px;top:574px;">Plot ranges:</div>
<svg class="a" style="left:925px;top:568px" width="167" height="22"><rect x="2.00" y="2.60" width="161.70" height="16.00" rx="2.0" fill="#2d3135" stroke="#3f4449" stroke-width="1.0"/></svg>
<div class="t " style="left:930.4px;top:574px;color:#5e6266">1 : x = 0 .. 180, y = 0 .. 18</div>
<svg class="a" style="left:1077.50px;top:573.80px" width="10" height="10" viewBox="0 0 16 16" fill="none" stroke="#5e6266" stroke-width="1.5" ><path d="M3 6 L8 11 L13 6" stroke-width="1.4"/></svg>
<svg class="a" style="left:855px;top:594px" width="15" height="15"><rect x="2.00" y="2.80" width="9.00" height="9.00" rx="1.5" fill="#1f4a63" stroke="#3daee9" stroke-width="1.0"/></svg>
<svg class="a" style="left:858.00px;top:597.80px" width="7" height="7" viewBox="0 0 16 16" fill="none" stroke="#fcfcfc" stroke-width="1.5" ><path d="M3 8 L6.5 11.5 L13 4.5" stroke-width="2.4"/></svg>
<div class="t " style="left:869.4px;top:597px;">Visible</div>
<svg class="a" style="left:1076px;top:615px" width="25" height="25"><rect x="2.30" y="2.30" width="19.30" height="19.10" rx="2.0" fill="#2a2e32" stroke="#3f4449" stroke-width="1.0"/></svg>
<svg class="a" style="left:1097px;top:615px" width="25" height="25"><rect x="2.00" y="2.30" width="19.00" height="19.10" rx="2.0" fill="#34393e" stroke="#565b60" stroke-width="1.0"/></svg>
<svg class="a" style="left:1117px;top:615px" width="26" height="25"><rect x="2.40" y="2.30" width="19.60" height="19.10" rx="2.0" fill="#34393e" stroke="#565b60" stroke-width="1.0"/></svg>
<svg class="a" style="left:1082.25px;top:621.15px" width="11.5" height="11.5" viewBox="0 0 16 16" fill="none" stroke="#aeb1b3" stroke-width="1.5" ><path d="M3.5 2 H10 L13 5 V14 H3.5 Z M12.5 11 H8 M10 9.5 L8 11 L10 12.5" stroke-width="1.3"/></svg>
<svg class="a" style="left:1102.75px;top:621.15px" width="11.5" height="11.5" viewBox="0 0 16 16" fill="none" stroke="#fcfcfc" stroke-width="1.5" ><path d="M2.5 2.5 H11.5 L13.5 4.5 V13.5 H2.5 Z M5.5 2.5 V6.5 H10.5 V2.5 M5 13.5 V9.5 H11 V13.5" stroke-width="1.5"/></svg>
<svg class="a" style="left:1123.25px;top:621.15px" width="11.5" height="11.5" viewBox="0 0 16 16" fill="none" stroke="#fcfcfc" stroke-width="1.5" ><path d="M2.5 2.5 H11.5 L13.5 4.5 V8 M8 13.5 H2.5 V2.5 M5.5 2.5 V6.5 H10.5 V2.5" stroke-width="1.5"/><path d="M9 13.5 L9.5 11 L13.5 7 L15 8.5 L11 12.8 Z" stroke-width="1.2"/></svg>
</body></html>
